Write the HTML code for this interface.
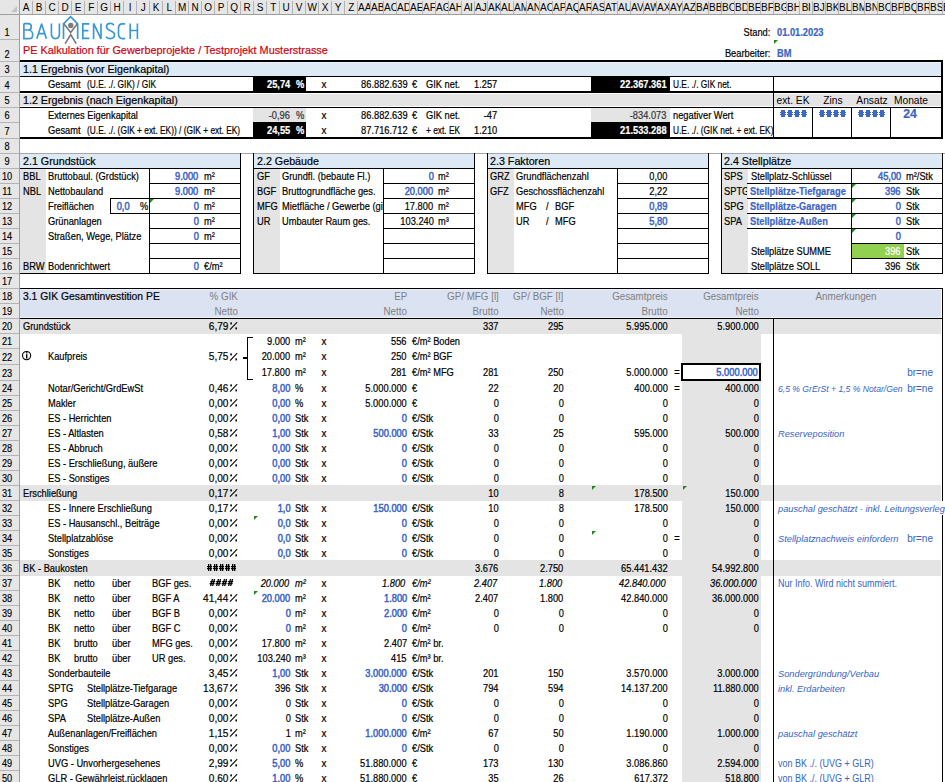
<!DOCTYPE html><html><head><meta charset="utf-8"><style>
html,body{margin:0;padding:0;background:#fff;}
body{width:945px;height:782px;position:relative;overflow:hidden;font-family:"Liberation Sans",sans-serif;}
i{position:absolute;display:block;}
.t{position:absolute;white-space:nowrap;font-weight:400;line-height:1;-webkit-text-stroke:0.2px currentColor;}
.ch{position:absolute;top:0;height:14px;line-height:16px;font-size:10px;font-weight:400;text-align:center;overflow:hidden;color:#000;white-space:nowrap;letter-spacing:-0.4px;}
.rh{position:absolute;left:0;width:14px;text-align:center;font-size:10px;line-height:1;color:#000;transform:scaleX(0.92);transform-origin:7px 0;-webkit-text-stroke:0.15px #000;white-space:nowrap;}
</style></head><body><svg style="position:absolute;left:0;top:0" width="160" height="50" viewBox="0 0 160 50">
<g fill="none" stroke="#3898d4" stroke-width="1.65" stroke-linecap="butt" stroke-linejoin="miter">
<path d="M23.9 23.6V38.6H28.9C31.3 38.6 32.7 37.2 32.7 34.9C32.7 32.4 31.1 30.0 28.5 30.0H23.9M28.5 30.0C30.3 30.0 31.3 28.7 31.3 26.8C31.3 24.8 30.1 23.6 28.1 23.6H23.9"/>
<path d="M36.8 38.8L41.6 24.0L46.4 38.8M38.4 33.6h6.4" stroke-linejoin="round"/>
<path d="M51.4 23.4V33.5c0 3.4 1.6 5.1 4 5.1s4-1.7 4-5.1V23.4"/>
<path d="M63.5 39V23.8L70.6 16.6L77.7 23.8V39"/>
<path d="M89.4 23.8h-6.6V38.4h6.6M82.8 30.6h5.6"/>
<path d="M93.6 39V23.4L101 38.8V23.4"/>
<path d="M114 25.2c-0.9-1.1-2.1-1.8-3.7-1.8c-2.3 0-3.8 1.4-3.8 3.4c0 4.6 8 3.1 8 7.8c0 2.3-1.7 4-4.3 4c-1.7 0-3.1-0.7-4.2-1.9"/>
<path d="M125.2 23.8h-2.8c-2.6 0-3.9 1.6-3.9 4.5v5.8c0 2.9 1.3 4.5 3.9 4.5h2.8"/>
<path d="M130.2 23.4V39M137.4 23.4V39M130.2 30.5h7.2"/>
</g>
<g stroke="#777" stroke-width="1.6" fill="none">
<path d="M63.6 23.6L70.7 32.4L77.6 23.6"/>
<path d="M65.2 43.6L70.7 34.6L76.2 43.6"/>
</g>
<circle cx="70.8" cy="25.5" r="2.7" fill="#7b7b7b"/>
</svg>
<b class="t" style="top:45.27px;font-size:11.5px;color:#d0000f;left:22.6px;transform:scaleX(0.945);transform-origin:0 0;">PE Kalkulation für Gewerbeprojekte / Testprojekt Musterstrasse</b>
<b class="t" style="top:27.11px;font-size:10.5px;color:#000;right:174.5px;transform:scaleX(0.885);transform-origin:100% 0;">Stand:</b>
<b class="t" style="top:27.11px;font-size:10.5px;color:#3b64c6;font-weight:700;left:776.5px;transform:scaleX(0.885);transform-origin:0 0;">01.01.2023</b>
<i style="left:774px;top:40px;width:0;height:0;background:none;border-top:4px solid #1e8a1e;border-right:4px solid transparent"></i>
<b class="t" style="top:48.11px;font-size:10.5px;color:#000;right:174.5px;transform:scaleX(0.885);transform-origin:100% 0;">Bearbeiter:</b>
<b class="t" style="top:48.11px;font-size:10.5px;color:#3b64c6;font-weight:700;left:776.5px;transform:scaleX(0.885);transform-origin:0 0;">BM</b>
<i style="left:20px;top:60px;width:923px;height:2px;background:#000"></i>
<i style="left:20px;top:62px;width:921px;height:14px;background:#eef5fb"></i>
<i style="left:20px;top:63px;width:921px;height:13px;background:#dde9f5"></i>
<i style="left:20px;top:76px;width:923px;height:1px;background:#000"></i>
<i style="left:253px;top:77px;width:53px;height:15px;background:#000"></i>
<i style="left:591px;top:77px;width:79px;height:15px;background:#000"></i>
<i style="left:20px;top:91px;width:923px;height:2px;background:#000"></i>
<i style="left:20px;top:94px;width:921px;height:12px;background:#e4e4e4"></i>
<i style="left:20px;top:107px;width:923px;height:1px;background:#000"></i>
<i style="left:253px;top:108px;width:53px;height:14px;background:#e4e4e4"></i>
<i style="left:253px;top:122px;width:53px;height:16px;background:#000"></i>
<i style="left:591px;top:108px;width:79px;height:14px;background:#e4e4e4"></i>
<i style="left:591px;top:122px;width:79px;height:16px;background:#000"></i>
<i style="left:20px;top:137px;width:923px;height:2px;background:#000"></i>
<i style="left:941px;top:60px;width:2px;height:79px;background:#000"></i>
<i style="left:773px;top:77px;width:1px;height:62px;background:#000"></i>
<i style="left:812px;top:107px;width:1px;height:32px;background:#000"></i>
<i style="left:851px;top:107px;width:1px;height:32px;background:#000"></i>
<i style="left:890px;top:107px;width:1px;height:32px;background:#000"></i>
<b class="t" style="top:64.39px;font-size:11px;color:#000;left:22.7px;transform:scaleX(0.973);transform-origin:0 0;">1.1 Ergebnis (vor Eigenkapital)</b>
<b class="t" style="top:79.11px;font-size:10.5px;color:#000;left:48px;transform:scaleX(0.885);transform-origin:0 0;">Gesamt</b>
<b class="t" style="top:79.11px;font-size:10.5px;color:#000;left:87.4px;transform:scaleX(0.795);transform-origin:0 0;">(U.E. ./. GIK) / GIK</b>
<b class="t" style="top:79.11px;font-size:10.5px;color:#fff;font-weight:700;right:655px;transform:scaleX(0.885);transform-origin:100% 0;">25,74</b>
<b class="t" style="top:79.11px;font-size:10.5px;color:#fff;font-weight:700;left:296px;transform:scaleX(0.885);transform-origin:0 0;">%</b>
<b class="t" style="top:79.11px;font-size:10.5px;color:#000;left:324px;transform:translateX(-50%) scaleX(0.95);transform-origin:50% 0;">x</b>
<b class="t" style="top:79.11px;font-size:10.5px;color:#000;right:537.5px;transform:scaleX(0.885);transform-origin:100% 0;">86.882.639</b>
<b class="t" style="top:79.11px;font-size:10.5px;color:#000;left:412px;transform:scaleX(0.885);transform-origin:0 0;">€</b>
<b class="t" style="top:79.11px;font-size:10.5px;color:#000;left:425.5px;transform:scaleX(0.885);transform-origin:0 0;">GIK net.</b>
<b class="t" style="top:79.11px;font-size:10.5px;color:#000;right:447.5px;transform:scaleX(0.885);transform-origin:100% 0;">1.257</b>
<b class="t" style="top:79.11px;font-size:10.5px;color:#fff;font-weight:700;right:278.5px;transform:scaleX(0.885);transform-origin:100% 0;">22.367.361</b>
<b class="t" style="top:79.11px;font-size:10.5px;color:#000;left:673px;transform:scaleX(0.795);transform-origin:0 0;">U.E. ./. GIK net.</b>
<b class="t" style="top:95.39px;font-size:11px;color:#000;left:22.7px;transform:scaleX(0.973);transform-origin:0 0;">1.2 Ergebnis (nach Eigenkapital)</b>
<b class="t" style="top:94.69px;font-size:11px;color:#000;left:793px;transform:translateX(-50%) scaleX(0.93);transform-origin:50% 0;-webkit-text-stroke:0;">ext. EK</b>
<b class="t" style="top:94.69px;font-size:11px;color:#000;left:832.5px;transform:translateX(-50%) scaleX(0.93);transform-origin:50% 0;-webkit-text-stroke:0;">Zins</b>
<b class="t" style="top:94.69px;font-size:11px;color:#000;left:871.5px;transform:translateX(-50%) scaleX(0.93);transform-origin:50% 0;-webkit-text-stroke:0;">Ansatz</b>
<b class="t" style="top:94.69px;font-size:11px;color:#000;left:911px;transform:translateX(-50%) scaleX(0.93);transform-origin:50% 0;-webkit-text-stroke:0;">Monate</b>
<b class="t" style="top:110.11px;font-size:10.5px;color:#000;left:48px;transform:scaleX(0.885);transform-origin:0 0;">Externes Eigenkapital</b>
<b class="t" style="top:110.11px;font-size:10.5px;color:#333;right:655px;transform:scaleX(0.885);transform-origin:100% 0;">-0,96</b>
<b class="t" style="top:110.11px;font-size:10.5px;color:#333;left:296px;transform:scaleX(0.885);transform-origin:0 0;">%</b>
<b class="t" style="top:110.11px;font-size:10.5px;color:#000;left:324px;transform:translateX(-50%) scaleX(0.95);transform-origin:50% 0;">x</b>
<b class="t" style="top:110.11px;font-size:10.5px;color:#000;right:537.5px;transform:scaleX(0.885);transform-origin:100% 0;">86.882.639</b>
<b class="t" style="top:110.11px;font-size:10.5px;color:#000;left:412px;transform:scaleX(0.885);transform-origin:0 0;">€</b>
<b class="t" style="top:110.11px;font-size:10.5px;color:#000;left:425.5px;transform:scaleX(0.885);transform-origin:0 0;">GIK net.</b>
<b class="t" style="top:110.11px;font-size:10.5px;color:#000;right:447.5px;transform:scaleX(0.885);transform-origin:100% 0;">-47</b>
<b class="t" style="top:110.11px;font-size:10.5px;color:#333;right:278.5px;transform:scaleX(0.885);transform-origin:100% 0;">-834.073</b>
<b class="t" style="top:110.11px;font-size:10.5px;color:#000;left:673px;transform:scaleX(0.885);transform-origin:0 0;">negativer Wert</b>
<i style="left:781px;top:110px;width:4px;height:7px;background:#3c68c8"></i>
<i style="left:780px;top:112px;width:6px;height:1px;background:#3c68c8"></i>
<i style="left:780px;top:114px;width:6px;height:1px;background:#3c68c8"></i>
<i style="left:788px;top:110px;width:4px;height:7px;background:#3c68c8"></i>
<i style="left:787px;top:112px;width:6px;height:1px;background:#3c68c8"></i>
<i style="left:787px;top:114px;width:6px;height:1px;background:#3c68c8"></i>
<i style="left:795px;top:110px;width:4px;height:7px;background:#3c68c8"></i>
<i style="left:794px;top:112px;width:6px;height:1px;background:#3c68c8"></i>
<i style="left:794px;top:114px;width:6px;height:1px;background:#3c68c8"></i>
<i style="left:802px;top:110px;width:4px;height:7px;background:#3c68c8"></i>
<i style="left:801px;top:112px;width:6px;height:1px;background:#3c68c8"></i>
<i style="left:801px;top:114px;width:6px;height:1px;background:#3c68c8"></i>
<i style="left:820px;top:110px;width:4px;height:7px;background:#3c68c8"></i>
<i style="left:819px;top:112px;width:6px;height:1px;background:#3c68c8"></i>
<i style="left:819px;top:114px;width:6px;height:1px;background:#3c68c8"></i>
<i style="left:827px;top:110px;width:4px;height:7px;background:#3c68c8"></i>
<i style="left:826px;top:112px;width:6px;height:1px;background:#3c68c8"></i>
<i style="left:826px;top:114px;width:6px;height:1px;background:#3c68c8"></i>
<i style="left:834px;top:110px;width:4px;height:7px;background:#3c68c8"></i>
<i style="left:833px;top:112px;width:6px;height:1px;background:#3c68c8"></i>
<i style="left:833px;top:114px;width:6px;height:1px;background:#3c68c8"></i>
<i style="left:841px;top:110px;width:4px;height:7px;background:#3c68c8"></i>
<i style="left:840px;top:112px;width:6px;height:1px;background:#3c68c8"></i>
<i style="left:840px;top:114px;width:6px;height:1px;background:#3c68c8"></i>
<i style="left:859px;top:110px;width:4px;height:7px;background:#3c68c8"></i>
<i style="left:858px;top:112px;width:6px;height:1px;background:#3c68c8"></i>
<i style="left:858px;top:114px;width:6px;height:1px;background:#3c68c8"></i>
<i style="left:866px;top:110px;width:4px;height:7px;background:#3c68c8"></i>
<i style="left:865px;top:112px;width:6px;height:1px;background:#3c68c8"></i>
<i style="left:865px;top:114px;width:6px;height:1px;background:#3c68c8"></i>
<i style="left:873px;top:110px;width:4px;height:7px;background:#3c68c8"></i>
<i style="left:872px;top:112px;width:6px;height:1px;background:#3c68c8"></i>
<i style="left:872px;top:114px;width:6px;height:1px;background:#3c68c8"></i>
<i style="left:880px;top:110px;width:4px;height:7px;background:#3c68c8"></i>
<i style="left:879px;top:112px;width:6px;height:1px;background:#3c68c8"></i>
<i style="left:879px;top:114px;width:6px;height:1px;background:#3c68c8"></i>
<b class="t" style="top:107.92px;font-size:12.5px;color:#3b64c6;font-weight:700;left:910.3px;transform:translateX(-50%) scaleX(0.98);transform-origin:50% 0;">24</b>
<b class="t" style="top:125.11px;font-size:10.5px;color:#000;left:48px;transform:scaleX(0.885);transform-origin:0 0;">Gesamt</b>
<b class="t" style="top:125.11px;font-size:10.5px;color:#000;left:87.4px;transform:scaleX(0.795);transform-origin:0 0;">(U.E. ./. (GIK + ext. EK)) / (GIK + ext. EK)</b>
<b class="t" style="top:125.11px;font-size:10.5px;color:#fff;font-weight:700;right:655px;transform:scaleX(0.885);transform-origin:100% 0;">24,55</b>
<b class="t" style="top:125.11px;font-size:10.5px;color:#fff;font-weight:700;left:296px;transform:scaleX(0.885);transform-origin:0 0;">%</b>
<b class="t" style="top:125.11px;font-size:10.5px;color:#000;left:324px;transform:translateX(-50%) scaleX(0.95);transform-origin:50% 0;">x</b>
<b class="t" style="top:125.11px;font-size:10.5px;color:#000;right:537.5px;transform:scaleX(0.885);transform-origin:100% 0;">87.716.712</b>
<b class="t" style="top:125.11px;font-size:10.5px;color:#000;left:412px;transform:scaleX(0.885);transform-origin:0 0;">€</b>
<b class="t" style="top:125.11px;font-size:10.5px;color:#000;left:425.5px;transform:scaleX(0.795);transform-origin:0 0;">+ ext. EK</b>
<b class="t" style="top:125.11px;font-size:10.5px;color:#000;right:447.5px;transform:scaleX(0.885);transform-origin:100% 0;">1.210</b>
<b class="t" style="top:125.11px;font-size:10.5px;color:#fff;font-weight:700;right:278.5px;transform:scaleX(0.885);transform-origin:100% 0;">21.533.288</b>
<div style="position:absolute;left:670px;top:123px;width:103px;height:16px;overflow:hidden">
<b class="t" style="top:2.11px;font-size:10.5px;color:#000;left:3px;transform:scaleX(0.795);transform-origin:0 0;">U.E. ./. (GIK net. + ext. EK)</b></div>
<i style="left:20px;top:153px;width:925px;height:1px;background:#a6a6a6"></i>
<i style="left:20px;top:154px;width:220px;height:14px;background:#dde9f5"></i>
<i style="left:20px;top:168px;width:221px;height:1px;background:#000"></i>
<i style="left:240px;top:153px;width:1px;height:121px;background:#000"></i>
<i style="left:20px;top:169px;width:26px;height:104px;background:#e4e4e4"></i>
<i style="left:149px;top:168px;width:1px;height:106px;background:#000"></i>
<i style="left:149px;top:183px;width:92px;height:1px;background:#000"></i>
<i style="left:110px;top:198px;width:131px;height:1px;background:#000"></i>
<i style="left:110px;top:213px;width:131px;height:1px;background:#000"></i>
<i style="left:149px;top:228px;width:92px;height:1px;background:#000"></i>
<i style="left:149px;top:243px;width:92px;height:1px;background:#000"></i>
<i style="left:149px;top:258px;width:92px;height:1px;background:#000"></i>
<i style="left:20px;top:273px;width:221px;height:1px;background:#000"></i>
<i style="left:110px;top:198px;width:1px;height:16px;background:#000"></i>
<i style="left:253px;top:153px;width:1px;height:121px;background:#000"></i>
<i style="left:254px;top:154px;width:220px;height:14px;background:#dde9f5"></i>
<i style="left:253px;top:168px;width:222px;height:1px;background:#000"></i>
<i style="left:474px;top:153px;width:1px;height:121px;background:#000"></i>
<i style="left:254px;top:169px;width:26px;height:104px;background:#e4e4e4"></i>
<i style="left:383px;top:168px;width:1px;height:106px;background:#000"></i>
<i style="left:383px;top:183px;width:92px;height:1px;background:#000"></i>
<i style="left:383px;top:198px;width:92px;height:1px;background:#000"></i>
<i style="left:383px;top:213px;width:92px;height:1px;background:#000"></i>
<i style="left:383px;top:228px;width:92px;height:1px;background:#000"></i>
<i style="left:383px;top:243px;width:92px;height:1px;background:#000"></i>
<i style="left:383px;top:258px;width:92px;height:1px;background:#000"></i>
<i style="left:253px;top:273px;width:222px;height:1px;background:#000"></i>
<i style="left:487px;top:153px;width:1px;height:121px;background:#000"></i>
<i style="left:488px;top:154px;width:220px;height:14px;background:#dde9f5"></i>
<i style="left:487px;top:168px;width:222px;height:1px;background:#000"></i>
<i style="left:708px;top:153px;width:1px;height:121px;background:#000"></i>
<i style="left:488px;top:169px;width:26px;height:104px;background:#e4e4e4"></i>
<i style="left:617px;top:168px;width:1px;height:106px;background:#000"></i>
<i style="left:617px;top:183px;width:92px;height:1px;background:#000"></i>
<i style="left:617px;top:198px;width:92px;height:1px;background:#000"></i>
<i style="left:617px;top:213px;width:92px;height:1px;background:#000"></i>
<i style="left:617px;top:228px;width:92px;height:1px;background:#000"></i>
<i style="left:617px;top:243px;width:92px;height:1px;background:#000"></i>
<i style="left:617px;top:258px;width:92px;height:1px;background:#000"></i>
<i style="left:487px;top:273px;width:222px;height:1px;background:#000"></i>
<i style="left:721px;top:153px;width:1px;height:121px;background:#000"></i>
<i style="left:722px;top:154px;width:220px;height:14px;background:#dde9f5"></i>
<i style="left:721px;top:168px;width:222px;height:1px;background:#000"></i>
<i style="left:942px;top:153px;width:1px;height:121px;background:#000"></i>
<i style="left:722px;top:169px;width:26px;height:104px;background:#e4e4e4"></i>
<i style="left:851px;top:168px;width:1px;height:106px;background:#000"></i>
<i style="left:747px;top:183px;width:196px;height:1px;background:#000"></i>
<i style="left:747px;top:198px;width:196px;height:1px;background:#000"></i>
<i style="left:747px;top:213px;width:196px;height:1px;background:#000"></i>
<i style="left:747px;top:228px;width:196px;height:1px;background:#000"></i>
<i style="left:851px;top:243px;width:92px;height:1px;background:#000"></i>
<i style="left:851px;top:258px;width:92px;height:1px;background:#000"></i>
<i style="left:721px;top:273px;width:222px;height:1px;background:#000"></i>
<i style="left:852px;top:244px;width:52px;height:14px;background:#92d050"></i>
<b class="t" style="top:156.39px;font-size:11px;color:#000;left:22.5px;transform:scaleX(0.973);transform-origin:0 0;">2.1 Grundstück</b>
<b class="t" style="top:171.11px;font-size:10.5px;color:#000;left:22.5px;transform:scaleX(0.885);transform-origin:0 0;">BBL</b>
<b class="t" style="top:171.11px;font-size:10.5px;color:#000;left:48px;transform:scaleX(0.885);transform-origin:0 0;">Bruttobaul. (Grdstück)</b>
<b class="t" style="top:171.11px;font-size:10.5px;color:#3b64c6;right:746.5px;transform:scaleX(0.885);transform-origin:100% 0;-webkit-text-stroke:0.5px #3b64c6;">9.000</b>
<b class="t" style="top:171.11px;font-size:10.5px;color:#000;left:204px;transform:scaleX(0.885);transform-origin:0 0;">m²</b>
<b class="t" style="top:186.11px;font-size:10.5px;color:#000;left:22.5px;transform:scaleX(0.885);transform-origin:0 0;">NBL</b>
<b class="t" style="top:186.11px;font-size:10.5px;color:#000;left:48px;transform:scaleX(0.885);transform-origin:0 0;">Nettobauland</b>
<b class="t" style="top:186.11px;font-size:10.5px;color:#3b64c6;right:746.5px;transform:scaleX(0.885);transform-origin:100% 0;-webkit-text-stroke:0.5px #3b64c6;">9.000</b>
<b class="t" style="top:186.11px;font-size:10.5px;color:#000;left:204px;transform:scaleX(0.885);transform-origin:0 0;">m²</b>
<b class="t" style="top:201.11px;font-size:10.5px;color:#000;left:48px;transform:scaleX(0.885);transform-origin:0 0;">Freiflächen</b>
<b class="t" style="top:201.11px;font-size:10.5px;color:#3b64c6;right:815px;transform:scaleX(0.885);transform-origin:100% 0;-webkit-text-stroke:0.5px #3b64c6;">0,0</b>
<b class="t" style="top:201.11px;font-size:10.5px;color:#000;left:139.5px;transform:scaleX(0.885);transform-origin:0 0;">%</b>
<b class="t" style="top:201.11px;font-size:10.5px;color:#3b64c6;right:746.5px;transform:scaleX(0.885);transform-origin:100% 0;-webkit-text-stroke:0.5px #3b64c6;">0</b>
<b class="t" style="top:201.11px;font-size:10.5px;color:#000;left:204px;transform:scaleX(0.885);transform-origin:0 0;">m²</b>
<i style="left:150px;top:199px;width:0;height:0;background:none;border-top:4px solid #1e8a1e;border-right:4px solid transparent"></i>
<b class="t" style="top:216.11px;font-size:10.5px;color:#000;left:48px;transform:scaleX(0.885);transform-origin:0 0;">Grünanlagen</b>
<b class="t" style="top:216.11px;font-size:10.5px;color:#3b64c6;right:746.5px;transform:scaleX(0.885);transform-origin:100% 0;-webkit-text-stroke:0.5px #3b64c6;">0</b>
<b class="t" style="top:216.11px;font-size:10.5px;color:#000;left:204px;transform:scaleX(0.885);transform-origin:0 0;">m²</b>
<b class="t" style="top:231.11px;font-size:10.5px;color:#000;left:48px;transform:scaleX(0.885);transform-origin:0 0;">Straßen, Wege, Plätze</b>
<b class="t" style="top:231.11px;font-size:10.5px;color:#3b64c6;right:746.5px;transform:scaleX(0.885);transform-origin:100% 0;-webkit-text-stroke:0.5px #3b64c6;">0</b>
<b class="t" style="top:231.11px;font-size:10.5px;color:#000;left:204px;transform:scaleX(0.885);transform-origin:0 0;">m²</b>
<b class="t" style="top:261.11px;font-size:10.5px;color:#000;left:22.5px;transform:scaleX(0.885);transform-origin:0 0;">BRW</b>
<b class="t" style="top:261.11px;font-size:10.5px;color:#000;left:48px;transform:scaleX(0.885);transform-origin:0 0;">Bodenrichtwert</b>
<b class="t" style="top:261.11px;font-size:10.5px;color:#3b64c6;right:746.5px;transform:scaleX(0.885);transform-origin:100% 0;-webkit-text-stroke:0.5px #3b64c6;">0</b>
<b class="t" style="top:261.11px;font-size:10.5px;color:#000;left:204px;transform:scaleX(0.885);transform-origin:0 0;">€/m²</b>
<b class="t" style="top:156.39px;font-size:11px;color:#000;left:256.5px;transform:scaleX(0.973);transform-origin:0 0;">2.2 Gebäude</b>
<b class="t" style="top:171.11px;font-size:10.5px;color:#000;left:256.5px;transform:scaleX(0.885);transform-origin:0 0;">GF</b>
<b class="t" style="top:171.11px;font-size:10.5px;color:#000;left:282.4px;transform:scaleX(0.885);transform-origin:0 0;">Grundfl. (bebaute Fl.)</b>
<b class="t" style="top:171.11px;font-size:10.5px;color:#3b64c6;right:511.5px;transform:scaleX(0.885);transform-origin:100% 0;-webkit-text-stroke:0.5px #3b64c6;">0</b>
<b class="t" style="top:171.11px;font-size:10.5px;color:#000;left:438px;transform:scaleX(0.885);transform-origin:0 0;">m²</b>
<b class="t" style="top:186.11px;font-size:10.5px;color:#000;left:256.5px;transform:scaleX(0.885);transform-origin:0 0;">BGF</b>
<b class="t" style="top:186.11px;font-size:10.5px;color:#000;left:282.4px;transform:scaleX(0.885);transform-origin:0 0;">Bruttogrundfläche ges.</b>
<b class="t" style="top:186.11px;font-size:10.5px;color:#3b64c6;right:511.5px;transform:scaleX(0.885);transform-origin:100% 0;-webkit-text-stroke:0.5px #3b64c6;">20.000</b>
<b class="t" style="top:186.11px;font-size:10.5px;color:#000;left:438px;transform:scaleX(0.885);transform-origin:0 0;">m²</b>
<b class="t" style="top:201.11px;font-size:10.5px;color:#000;left:256.5px;transform:scaleX(0.885);transform-origin:0 0;">MFG</b>
<div style="position:absolute;left:280px;top:199px;width:103px;height:15px;overflow:hidden">
<b class="t" style="top:2.11px;font-size:10.5px;color:#000;left:2.3999999999999773px;transform:scaleX(0.885);transform-origin:0 0;">Mietfläche / Gewerbe (gif)</b></div>
<b class="t" style="top:201.11px;font-size:10.5px;color:#000;right:511.5px;transform:scaleX(0.885);transform-origin:100% 0;">17.800</b>
<b class="t" style="top:201.11px;font-size:10.5px;color:#000;left:438px;transform:scaleX(0.885);transform-origin:0 0;">m²</b>
<b class="t" style="top:216.11px;font-size:10.5px;color:#000;left:256.5px;transform:scaleX(0.885);transform-origin:0 0;">UR</b>
<b class="t" style="top:216.11px;font-size:10.5px;color:#000;left:282.4px;transform:scaleX(0.885);transform-origin:0 0;">Umbauter Raum ges.</b>
<b class="t" style="top:216.11px;font-size:10.5px;color:#000;right:511.5px;transform:scaleX(0.885);transform-origin:100% 0;">103.240</b>
<b class="t" style="top:216.11px;font-size:10.5px;color:#000;left:438px;transform:scaleX(0.885);transform-origin:0 0;">m³</b>
<b class="t" style="top:156.39px;font-size:11px;color:#000;left:489.8px;transform:scaleX(0.973);transform-origin:0 0;">2.3 Faktoren</b>
<b class="t" style="top:171.11px;font-size:10.5px;color:#000;left:489.8px;transform:scaleX(0.885);transform-origin:0 0;">GRZ</b>
<b class="t" style="top:171.11px;font-size:10.5px;color:#000;left:516.3px;transform:scaleX(0.885);transform-origin:0 0;">Grundflächenzahl</b>
<b class="t" style="top:171.11px;font-size:10.5px;color:#000;right:278px;transform:scaleX(0.885);transform-origin:100% 0;">0,00</b>
<b class="t" style="top:186.11px;font-size:10.5px;color:#000;left:489.8px;transform:scaleX(0.885);transform-origin:0 0;">GFZ</b>
<b class="t" style="top:186.11px;font-size:10.5px;color:#000;left:516.3px;transform:scaleX(0.885);transform-origin:0 0;">Geschossflächenzahl</b>
<b class="t" style="top:186.11px;font-size:10.5px;color:#000;right:278px;transform:scaleX(0.885);transform-origin:100% 0;">2,22</b>
<b class="t" style="top:201.11px;font-size:10.5px;color:#000;left:516.3px;transform:scaleX(0.885);transform-origin:0 0;">MFG</b>
<b class="t" style="top:201.11px;font-size:10.5px;color:#000;left:546px;transform:scaleX(0.885);transform-origin:0 0;">/</b>
<b class="t" style="top:201.11px;font-size:10.5px;color:#000;left:555.2px;transform:scaleX(0.885);transform-origin:0 0;">BGF</b>
<b class="t" style="top:201.11px;font-size:10.5px;color:#3b64c6;right:278px;transform:scaleX(0.885);transform-origin:100% 0;-webkit-text-stroke:0.5px #3b64c6;">0,89</b>
<b class="t" style="top:216.11px;font-size:10.5px;color:#000;left:516.3px;transform:scaleX(0.885);transform-origin:0 0;">UR</b>
<b class="t" style="top:216.11px;font-size:10.5px;color:#000;left:546px;transform:scaleX(0.885);transform-origin:0 0;">/</b>
<b class="t" style="top:216.11px;font-size:10.5px;color:#000;left:555.2px;transform:scaleX(0.885);transform-origin:0 0;">MFG</b>
<b class="t" style="top:216.11px;font-size:10.5px;color:#3b64c6;right:278px;transform:scaleX(0.885);transform-origin:100% 0;-webkit-text-stroke:0.5px #3b64c6;">5,80</b>
<b class="t" style="top:156.39px;font-size:11px;color:#000;left:724px;transform:scaleX(0.973);transform-origin:0 0;">2.4 Stellplätze</b>
<b class="t" style="top:171.11px;font-size:10.5px;color:#000;left:724px;transform:scaleX(0.885);transform-origin:0 0;">SPS</b>
<b class="t" style="top:171.11px;font-size:10.5px;color:#000;left:750.6px;transform:scaleX(0.885);transform-origin:0 0;">Stellplatz-Schlüssel</b>
<b class="t" style="top:171.11px;font-size:10.5px;color:#3b64c6;right:44px;transform:scaleX(0.885);transform-origin:100% 0;-webkit-text-stroke:0.5px #3b64c6;">45,00</b>
<b class="t" style="top:171.11px;font-size:10.5px;color:#000;left:906px;transform:scaleX(0.885);transform-origin:0 0;">m²/Stk</b>
<div style="position:absolute;left:722px;top:184px;width:25px;height:15px;overflow:hidden">
<b class="t" style="top:2.11px;font-size:10.5px;color:#000;left:2px;transform:scaleX(0.885);transform-origin:0 0;">SPTG</b></div>
<b class="t" style="top:186.11px;font-size:10.5px;color:#3b64c6;font-weight:700;left:750.4px;transform:scaleX(0.885);transform-origin:0 0;">Stellplätze-Tiefgarage</b>
<b class="t" style="top:186.11px;font-size:10.5px;color:#3b64c6;right:44px;transform:scaleX(0.885);transform-origin:100% 0;-webkit-text-stroke:0.5px #3b64c6;">396</b>
<b class="t" style="top:186.11px;font-size:10.5px;color:#000;left:906px;transform:scaleX(0.885);transform-origin:0 0;">Stk</b>
<b class="t" style="top:201.11px;font-size:10.5px;color:#000;left:724px;transform:scaleX(0.885);transform-origin:0 0;">SPG</b>
<b class="t" style="top:201.11px;font-size:10.5px;color:#3b64c6;font-weight:700;left:750.4px;transform:scaleX(0.885);transform-origin:0 0;">Stellplätze-Garagen</b>
<b class="t" style="top:201.11px;font-size:10.5px;color:#3b64c6;right:44px;transform:scaleX(0.885);transform-origin:100% 0;-webkit-text-stroke:0.5px #3b64c6;">0</b>
<b class="t" style="top:201.11px;font-size:10.5px;color:#000;left:906px;transform:scaleX(0.885);transform-origin:0 0;">Stk</b>
<b class="t" style="top:216.11px;font-size:10.5px;color:#000;left:724px;transform:scaleX(0.885);transform-origin:0 0;">SPA</b>
<b class="t" style="top:216.11px;font-size:10.5px;color:#3b64c6;font-weight:700;left:750.4px;transform:scaleX(0.885);transform-origin:0 0;">Stellplätze-Außen</b>
<b class="t" style="top:216.11px;font-size:10.5px;color:#3b64c6;right:44px;transform:scaleX(0.885);transform-origin:100% 0;-webkit-text-stroke:0.5px #3b64c6;">0</b>
<b class="t" style="top:216.11px;font-size:10.5px;color:#000;left:906px;transform:scaleX(0.885);transform-origin:0 0;">Stk</b>
<b class="t" style="top:231.11px;font-size:10.5px;color:#3b64c6;right:44px;transform:scaleX(0.885);transform-origin:100% 0;-webkit-text-stroke:0.5px #3b64c6;">0</b>
<b class="t" style="top:246.11px;font-size:10.5px;color:#000;left:750.6px;transform:scaleX(0.885);transform-origin:0 0;">Stellplätze SUMME</b>
<b class="t" style="top:246.11px;font-size:10.5px;color:#fff;right:44px;transform:scaleX(0.885);transform-origin:100% 0;">396</b>
<b class="t" style="top:246.11px;font-size:10.5px;color:#000;left:906px;transform:scaleX(0.885);transform-origin:0 0;">Stk</b>
<b class="t" style="top:261.11px;font-size:10.5px;color:#000;left:750.6px;transform:scaleX(0.885);transform-origin:0 0;">Stellplätze SOLL</b>
<b class="t" style="top:261.11px;font-size:10.5px;color:#000;right:44px;transform:scaleX(0.885);transform-origin:100% 0;">396</b>
<b class="t" style="top:261.11px;font-size:10.5px;color:#000;left:906px;transform:scaleX(0.885);transform-origin:0 0;">Stk</b>
<i style="left:852px;top:184px;width:0;height:0;background:none;border-top:4px solid #1e8a1e;border-right:4px solid transparent"></i>
<i style="left:852px;top:199px;width:0;height:0;background:none;border-top:4px solid #1e8a1e;border-right:4px solid transparent"></i>
<i style="left:852px;top:214px;width:0;height:0;background:none;border-top:4px solid #1e8a1e;border-right:4px solid transparent"></i>
<i style="left:852px;top:229px;width:0;height:0;background:none;border-top:4px solid #1e8a1e;border-right:4px solid transparent"></i>
<i style="left:20px;top:289px;width:921px;height:29px;background:#eef1f9"></i>
<i style="left:20px;top:290px;width:921px;height:27px;background:#dbe2f2"></i>
<i style="left:20px;top:288px;width:923px;height:1px;background:#000"></i>
<b class="t" style="top:291.39px;font-size:11px;color:#000;left:22.5px;transform:scaleX(0.973);transform-origin:0 0;transform:scaleX(0.94);">3.1 GIK Gesamtinvestition PE</b>
<b class="t" style="top:291.54px;font-size:10px;color:#7f7f7f;right:707px;transform:scaleX(0.98);transform-origin:100% 0;-webkit-text-stroke:0;">% GIK</b>
<b class="t" style="top:306.54px;font-size:10px;color:#7f7f7f;right:707px;transform:scaleX(0.98);transform-origin:100% 0;-webkit-text-stroke:0;">Netto</b>
<b class="t" style="top:291.54px;font-size:10px;color:#7f7f7f;right:538px;transform:scaleX(0.98);transform-origin:100% 0;-webkit-text-stroke:0;">EP</b>
<b class="t" style="top:306.54px;font-size:10px;color:#7f7f7f;right:538px;transform:scaleX(0.98);transform-origin:100% 0;-webkit-text-stroke:0;">Netto</b>
<b class="t" style="top:291.54px;font-size:10px;color:#7f7f7f;right:446.5px;transform:scaleX(0.98);transform-origin:100% 0;-webkit-text-stroke:0;">GP/ MFG [l]</b>
<b class="t" style="top:306.54px;font-size:10px;color:#7f7f7f;right:446.5px;transform:scaleX(0.98);transform-origin:100% 0;-webkit-text-stroke:0;">Brutto</b>
<b class="t" style="top:291.54px;font-size:10px;color:#7f7f7f;right:381.5px;transform:scaleX(0.98);transform-origin:100% 0;-webkit-text-stroke:0;">GP/ BGF [l]</b>
<b class="t" style="top:306.54px;font-size:10px;color:#7f7f7f;right:381.5px;transform:scaleX(0.98);transform-origin:100% 0;-webkit-text-stroke:0;">Netto</b>
<b class="t" style="top:291.54px;font-size:10px;color:#7f7f7f;right:277.5px;transform:scaleX(0.98);transform-origin:100% 0;-webkit-text-stroke:0;">Gesamtpreis</b>
<b class="t" style="top:306.54px;font-size:10px;color:#7f7f7f;right:277.5px;transform:scaleX(0.98);transform-origin:100% 0;-webkit-text-stroke:0;">Brutto</b>
<b class="t" style="top:291.54px;font-size:10px;color:#7f7f7f;right:186.5px;transform:scaleX(0.98);transform-origin:100% 0;-webkit-text-stroke:0;">Gesamtpreis</b>
<b class="t" style="top:306.54px;font-size:10px;color:#7f7f7f;right:186.5px;transform:scaleX(0.98);transform-origin:100% 0;-webkit-text-stroke:0;">Netto</b>
<b class="t" style="top:291.54px;font-size:10px;color:#7f7f7f;left:845.5px;transform:translateX(-50%) scaleX(0.98);transform-origin:50% 0;-webkit-text-stroke:0;">Anmerkungen</b>
<i style="left:682px;top:334px;width:79px;height:448px;background:#e4e4e4"></i>
<i style="left:20px;top:318px;width:921px;height:16px;background:#e4e4e4"></i>
<i style="left:20px;top:485px;width:921px;height:16px;background:#e4e4e4"></i>
<i style="left:20px;top:560px;width:921px;height:16px;background:#e4e4e4"></i>
<i style="left:20px;top:318px;width:923px;height:1px;background:#000"></i>
<i style="left:942px;top:288px;width:1px;height:31px;background:#000"></i>
<i style="left:942px;top:319px;width:1px;height:463px;background:#000"></i>
<i style="left:773px;top:319px;width:1px;height:463px;background:#000"></i>
<b class="t" style="top:321.11px;font-size:10.5px;color:#000;left:22.5px;transform:scaleX(0.885);transform-origin:0 0;">Grundstück</b>
<b class="t" style="top:321.11px;font-size:10.5px;color:#000;right:716.4px;transform:scaleX(0.96);transform-origin:100% 0;">6,79</b>
<svg style="position:absolute;left:229px;top:322px" width="10" height="10"><rect x="1.3" y="0.4" width="1.6" height="2" fill="#000"/><rect x="6.4" y="5.4" width="1.6" height="2" fill="#000"/><path d="M1 7.6L8.2 0.2" stroke="#000" stroke-width="1.1"/></svg>
<b class="t" style="top:321.11px;font-size:10.5px;color:#000;right:446.5px;transform:scaleX(0.885);transform-origin:100% 0;">337</b>
<b class="t" style="top:321.11px;font-size:10.5px;color:#000;right:381.5px;transform:scaleX(0.885);transform-origin:100% 0;">295</b>
<b class="t" style="top:321.11px;font-size:10.5px;color:#000;right:277.5px;transform:scaleX(0.885);transform-origin:100% 0;">5.995.000</b>
<b class="t" style="top:321.11px;font-size:10.5px;color:#000;right:186.5px;transform:scaleX(0.885);transform-origin:100% 0;">5.900.000</b>
<svg style="position:absolute;left:0;top:0" width="60" height="400"><circle cx="26.6" cy="355.6" r="4.1" fill="none" stroke="#000" stroke-width="1.1"/><rect x="26" y="354.2" width="1.4" height="4.3" fill="#000"/><rect x="26" y="352.2" width="1.4" height="1.2" fill="#000"/></svg>
<b class="t" style="top:351.11px;font-size:10.5px;color:#000;left:48px;transform:scaleX(0.885);transform-origin:0 0;">Kaufpreis</b>
<b class="t" style="top:351.11px;font-size:10.5px;color:#000;right:716.4px;transform:scaleX(0.96);transform-origin:100% 0;">5,75</b>
<svg style="position:absolute;left:229px;top:353px" width="10" height="10"><rect x="1.3" y="0.4" width="1.6" height="2" fill="#000"/><rect x="6.4" y="5.4" width="1.6" height="2" fill="#000"/><path d="M1 7.6L8.2 0.2" stroke="#000" stroke-width="1.1"/></svg>
<i style="left:247px;top:337px;width:1px;height:43px;background:#000"></i>
<i style="left:247px;top:337px;width:6px;height:1px;background:#000"></i>
<i style="left:247px;top:379px;width:6px;height:1px;background:#000"></i>
<i style="left:243px;top:357px;width:5px;height:2px;background:#000"></i>
<b class="t" style="top:336.11px;font-size:10.5px;color:#000;right:654.5px;transform:scaleX(0.885);transform-origin:100% 0;">9.000</b>
<b class="t" style="top:336.11px;font-size:10.5px;color:#000;left:295px;transform:scaleX(0.885);transform-origin:0 0;">m²</b>
<b class="t" style="top:336.11px;font-size:10.5px;color:#000;left:324px;transform:translateX(-50%) scaleX(0.95);transform-origin:50% 0;">x</b>
<b class="t" style="top:336.11px;font-size:10.5px;color:#000;right:538px;transform:scaleX(0.885);transform-origin:100% 0;">556</b>
<b class="t" style="top:336.11px;font-size:10.5px;color:#000;left:412px;transform:scaleX(0.885);transform-origin:0 0;">€/m² Boden</b>
<b class="t" style="top:351.11px;font-size:10.5px;color:#000;right:654.5px;transform:scaleX(0.885);transform-origin:100% 0;">20.000</b>
<b class="t" style="top:351.11px;font-size:10.5px;color:#000;left:295px;transform:scaleX(0.885);transform-origin:0 0;">m²</b>
<b class="t" style="top:351.11px;font-size:10.5px;color:#000;left:324px;transform:translateX(-50%) scaleX(0.95);transform-origin:50% 0;">x</b>
<b class="t" style="top:351.11px;font-size:10.5px;color:#000;right:538px;transform:scaleX(0.885);transform-origin:100% 0;">250</b>
<b class="t" style="top:351.11px;font-size:10.5px;color:#000;left:412px;transform:scaleX(0.885);transform-origin:0 0;">€/m² BGF</b>
<b class="t" style="top:367.11px;font-size:10.5px;color:#000;right:654.5px;transform:scaleX(0.885);transform-origin:100% 0;">17.800</b>
<b class="t" style="top:367.11px;font-size:10.5px;color:#000;left:295px;transform:scaleX(0.885);transform-origin:0 0;">m²</b>
<b class="t" style="top:367.11px;font-size:10.5px;color:#000;left:324px;transform:translateX(-50%) scaleX(0.95);transform-origin:50% 0;">x</b>
<b class="t" style="top:367.11px;font-size:10.5px;color:#000;right:538px;transform:scaleX(0.885);transform-origin:100% 0;">281</b>
<b class="t" style="top:367.11px;font-size:10.5px;color:#000;left:412px;transform:scaleX(0.885);transform-origin:0 0;">€/m² MFG</b>
<b class="t" style="top:367.11px;font-size:10.5px;color:#000;right:446.5px;transform:scaleX(0.885);transform-origin:100% 0;">281</b>
<b class="t" style="top:367.11px;font-size:10.5px;color:#000;right:381.5px;transform:scaleX(0.885);transform-origin:100% 0;">250</b>
<b class="t" style="top:367.11px;font-size:10.5px;color:#000;right:277.5px;transform:scaleX(0.885);transform-origin:100% 0;">5.000.000</b>
<b class="t" style="top:367.11px;font-size:10.5px;color:#000;left:677px;transform:translateX(-50%) scaleX(0.885);transform-origin:50% 0;">=</b>
<b class="t" style="top:367.54px;font-size:10px;color:#3564c8;right:12px;transform:scaleX(1.0);transform-origin:100% 0;-webkit-text-stroke:0;">br=ne</b>
<i style="left:681px;top:363px;width:80px;height:2px;background:#000"></i>
<i style="left:681px;top:379px;width:80px;height:2px;background:#000"></i>
<i style="left:681px;top:363px;width:2px;height:18px;background:#000"></i>
<i style="left:759px;top:363px;width:2px;height:18px;background:#000"></i>
<i style="left:683px;top:365px;width:76px;height:14px;background:#fff"></i>
<b class="t" style="top:367.11px;font-size:10.5px;color:#3b64c6;right:187.5px;transform:scaleX(0.885);transform-origin:100% 0;-webkit-text-stroke:0.5px #3b64c6;">5.000.000</b>
<b class="t" style="top:383.11px;font-size:10.5px;color:#000;left:48px;transform:scaleX(0.885);transform-origin:0 0;">Notar/Gericht/GrdEwSt</b>
<b class="t" style="top:383.11px;font-size:10.5px;color:#000;right:716.4px;transform:scaleX(0.96);transform-origin:100% 0;">0,46</b>
<svg style="position:absolute;left:229px;top:384px" width="10" height="10"><rect x="1.3" y="0.4" width="1.6" height="2" fill="#000"/><rect x="6.4" y="5.4" width="1.6" height="2" fill="#000"/><path d="M1 7.6L8.2 0.2" stroke="#000" stroke-width="1.1"/></svg>
<b class="t" style="top:383.11px;font-size:10.5px;color:#3b64c6;right:654.5px;transform:scaleX(0.885);transform-origin:100% 0;-webkit-text-stroke:0.5px #3b64c6;">8,00</b>
<b class="t" style="top:383.11px;font-size:10.5px;color:#000;left:295px;transform:scaleX(0.885);transform-origin:0 0;">%</b>
<b class="t" style="top:383.11px;font-size:10.5px;color:#000;left:324px;transform:translateX(-50%) scaleX(0.95);transform-origin:50% 0;">x</b>
<b class="t" style="top:383.11px;font-size:10.5px;color:#000;right:538px;transform:scaleX(0.885);transform-origin:100% 0;">5.000.000</b>
<b class="t" style="top:383.11px;font-size:10.5px;color:#000;left:412px;transform:scaleX(0.885);transform-origin:0 0;">€</b>
<b class="t" style="top:383.11px;font-size:10.5px;color:#000;right:446.5px;transform:scaleX(0.885);transform-origin:100% 0;">22</b>
<b class="t" style="top:383.11px;font-size:10.5px;color:#000;right:381.5px;transform:scaleX(0.885);transform-origin:100% 0;">20</b>
<b class="t" style="top:383.11px;font-size:10.5px;color:#000;right:277.5px;transform:scaleX(0.885);transform-origin:100% 0;">400.000</b>
<b class="t" style="top:383.11px;font-size:10.5px;color:#000;right:186.5px;transform:scaleX(0.885);transform-origin:100% 0;">400.000</b>
<b class="t" style="top:383.11px;font-size:10.5px;color:#000;left:677px;transform:translateX(-50%) scaleX(0.885);transform-origin:50% 0;">=</b>
<div style="position:absolute;left:774px;top:381px;width:171px;height:15px;overflow:hidden">
<b class="t" style="top:2.96px;font-size:9.5px;color:#3564c8;font-style:italic;left:4px;transform:scaleX(0.905);transform-origin:0 0;-webkit-text-stroke:0;">6,5 % GrErSt + 1,5 % Notar/Gen</b></div>
<b class="t" style="top:383.54px;font-size:10px;color:#3564c8;right:12px;transform:scaleX(1.0);transform-origin:100% 0;-webkit-text-stroke:0;">br=ne</b>
<b class="t" style="top:398.11px;font-size:10.5px;color:#000;left:48px;transform:scaleX(0.885);transform-origin:0 0;">Makler</b>
<b class="t" style="top:398.11px;font-size:10.5px;color:#000;right:716.4px;transform:scaleX(0.96);transform-origin:100% 0;">0,00</b>
<svg style="position:absolute;left:229px;top:399px" width="10" height="10"><rect x="1.3" y="0.4" width="1.6" height="2" fill="#000"/><rect x="6.4" y="5.4" width="1.6" height="2" fill="#000"/><path d="M1 7.6L8.2 0.2" stroke="#000" stroke-width="1.1"/></svg>
<b class="t" style="top:398.11px;font-size:10.5px;color:#3b64c6;right:654.5px;transform:scaleX(0.885);transform-origin:100% 0;-webkit-text-stroke:0.5px #3b64c6;">0,00</b>
<b class="t" style="top:398.11px;font-size:10.5px;color:#000;left:295px;transform:scaleX(0.885);transform-origin:0 0;">%</b>
<b class="t" style="top:398.11px;font-size:10.5px;color:#000;left:324px;transform:translateX(-50%) scaleX(0.95);transform-origin:50% 0;">x</b>
<b class="t" style="top:398.11px;font-size:10.5px;color:#000;right:538px;transform:scaleX(0.885);transform-origin:100% 0;">5.000.000</b>
<b class="t" style="top:398.11px;font-size:10.5px;color:#000;left:412px;transform:scaleX(0.885);transform-origin:0 0;">€</b>
<b class="t" style="top:398.11px;font-size:10.5px;color:#000;right:446.5px;transform:scaleX(0.885);transform-origin:100% 0;">0</b>
<b class="t" style="top:398.11px;font-size:10.5px;color:#000;right:381.5px;transform:scaleX(0.885);transform-origin:100% 0;">0</b>
<b class="t" style="top:398.11px;font-size:10.5px;color:#000;right:277.5px;transform:scaleX(0.885);transform-origin:100% 0;">0</b>
<b class="t" style="top:398.11px;font-size:10.5px;color:#000;right:186.5px;transform:scaleX(0.885);transform-origin:100% 0;">0</b>
<b class="t" style="top:413.11px;font-size:10.5px;color:#000;left:48px;transform:scaleX(0.885);transform-origin:0 0;">ES - Herrichten</b>
<b class="t" style="top:413.11px;font-size:10.5px;color:#000;right:716.4px;transform:scaleX(0.96);transform-origin:100% 0;">0,00</b>
<svg style="position:absolute;left:229px;top:414px" width="10" height="10"><rect x="1.3" y="0.4" width="1.6" height="2" fill="#000"/><rect x="6.4" y="5.4" width="1.6" height="2" fill="#000"/><path d="M1 7.6L8.2 0.2" stroke="#000" stroke-width="1.1"/></svg>
<b class="t" style="top:413.11px;font-size:10.5px;color:#3b64c6;right:654.5px;transform:scaleX(0.885);transform-origin:100% 0;-webkit-text-stroke:0.5px #3b64c6;">0,00</b>
<b class="t" style="top:413.11px;font-size:10.5px;color:#000;left:295px;transform:scaleX(0.885);transform-origin:0 0;">Stk</b>
<b class="t" style="top:413.11px;font-size:10.5px;color:#000;left:324px;transform:translateX(-50%) scaleX(0.95);transform-origin:50% 0;">x</b>
<b class="t" style="top:413.11px;font-size:10.5px;color:#3b64c6;right:538px;transform:scaleX(0.885);transform-origin:100% 0;-webkit-text-stroke:0.5px #3b64c6;">0</b>
<b class="t" style="top:413.11px;font-size:10.5px;color:#000;left:412px;transform:scaleX(0.885);transform-origin:0 0;">€/Stk</b>
<b class="t" style="top:413.11px;font-size:10.5px;color:#000;right:446.5px;transform:scaleX(0.885);transform-origin:100% 0;">0</b>
<b class="t" style="top:413.11px;font-size:10.5px;color:#000;right:381.5px;transform:scaleX(0.885);transform-origin:100% 0;">0</b>
<b class="t" style="top:413.11px;font-size:10.5px;color:#000;right:277.5px;transform:scaleX(0.885);transform-origin:100% 0;">0</b>
<b class="t" style="top:413.11px;font-size:10.5px;color:#000;right:186.5px;transform:scaleX(0.885);transform-origin:100% 0;">0</b>
<b class="t" style="top:428.11px;font-size:10.5px;color:#000;left:48px;transform:scaleX(0.885);transform-origin:0 0;">ES - Altlasten</b>
<b class="t" style="top:428.11px;font-size:10.5px;color:#000;right:716.4px;transform:scaleX(0.96);transform-origin:100% 0;">0,58</b>
<svg style="position:absolute;left:229px;top:429px" width="10" height="10"><rect x="1.3" y="0.4" width="1.6" height="2" fill="#000"/><rect x="6.4" y="5.4" width="1.6" height="2" fill="#000"/><path d="M1 7.6L8.2 0.2" stroke="#000" stroke-width="1.1"/></svg>
<b class="t" style="top:428.11px;font-size:10.5px;color:#3b64c6;right:654.5px;transform:scaleX(0.885);transform-origin:100% 0;-webkit-text-stroke:0.5px #3b64c6;">1,00</b>
<b class="t" style="top:428.11px;font-size:10.5px;color:#000;left:295px;transform:scaleX(0.885);transform-origin:0 0;">Stk</b>
<b class="t" style="top:428.11px;font-size:10.5px;color:#000;left:324px;transform:translateX(-50%) scaleX(0.95);transform-origin:50% 0;">x</b>
<b class="t" style="top:428.11px;font-size:10.5px;color:#3b64c6;right:538px;transform:scaleX(0.885);transform-origin:100% 0;-webkit-text-stroke:0.5px #3b64c6;">500.000</b>
<b class="t" style="top:428.11px;font-size:10.5px;color:#000;left:412px;transform:scaleX(0.885);transform-origin:0 0;">€/Stk</b>
<b class="t" style="top:428.11px;font-size:10.5px;color:#000;right:446.5px;transform:scaleX(0.885);transform-origin:100% 0;">33</b>
<b class="t" style="top:428.11px;font-size:10.5px;color:#000;right:381.5px;transform:scaleX(0.885);transform-origin:100% 0;">25</b>
<b class="t" style="top:428.11px;font-size:10.5px;color:#000;right:277.5px;transform:scaleX(0.885);transform-origin:100% 0;">595.000</b>
<b class="t" style="top:428.11px;font-size:10.5px;color:#000;right:186.5px;transform:scaleX(0.885);transform-origin:100% 0;">500.000</b>
<div style="position:absolute;left:774px;top:426px;width:171px;height:15px;overflow:hidden">
<b class="t" style="top:2.96px;font-size:9.5px;color:#3564c8;font-style:italic;left:4px;transform:scaleX(0.975);transform-origin:0 0;-webkit-text-stroke:0;">Reserveposition</b></div>
<b class="t" style="top:443.11px;font-size:10.5px;color:#000;left:48px;transform:scaleX(0.885);transform-origin:0 0;">ES - Abbruch</b>
<b class="t" style="top:443.11px;font-size:10.5px;color:#000;right:716.4px;transform:scaleX(0.96);transform-origin:100% 0;">0,00</b>
<svg style="position:absolute;left:229px;top:444px" width="10" height="10"><rect x="1.3" y="0.4" width="1.6" height="2" fill="#000"/><rect x="6.4" y="5.4" width="1.6" height="2" fill="#000"/><path d="M1 7.6L8.2 0.2" stroke="#000" stroke-width="1.1"/></svg>
<b class="t" style="top:443.11px;font-size:10.5px;color:#3b64c6;right:654.5px;transform:scaleX(0.885);transform-origin:100% 0;-webkit-text-stroke:0.5px #3b64c6;">0,00</b>
<b class="t" style="top:443.11px;font-size:10.5px;color:#000;left:295px;transform:scaleX(0.885);transform-origin:0 0;">Stk</b>
<b class="t" style="top:443.11px;font-size:10.5px;color:#000;left:324px;transform:translateX(-50%) scaleX(0.95);transform-origin:50% 0;">x</b>
<b class="t" style="top:443.11px;font-size:10.5px;color:#3b64c6;right:538px;transform:scaleX(0.885);transform-origin:100% 0;-webkit-text-stroke:0.5px #3b64c6;">0</b>
<b class="t" style="top:443.11px;font-size:10.5px;color:#000;left:412px;transform:scaleX(0.885);transform-origin:0 0;">€/Stk</b>
<b class="t" style="top:443.11px;font-size:10.5px;color:#000;right:446.5px;transform:scaleX(0.885);transform-origin:100% 0;">0</b>
<b class="t" style="top:443.11px;font-size:10.5px;color:#000;right:381.5px;transform:scaleX(0.885);transform-origin:100% 0;">0</b>
<b class="t" style="top:443.11px;font-size:10.5px;color:#000;right:277.5px;transform:scaleX(0.885);transform-origin:100% 0;">0</b>
<b class="t" style="top:443.11px;font-size:10.5px;color:#000;right:186.5px;transform:scaleX(0.885);transform-origin:100% 0;">0</b>
<b class="t" style="top:458.11px;font-size:10.5px;color:#000;left:48px;transform:scaleX(0.885);transform-origin:0 0;">ES - Erschließung, äußere</b>
<b class="t" style="top:458.11px;font-size:10.5px;color:#000;right:716.4px;transform:scaleX(0.96);transform-origin:100% 0;">0,00</b>
<svg style="position:absolute;left:229px;top:459px" width="10" height="10"><rect x="1.3" y="0.4" width="1.6" height="2" fill="#000"/><rect x="6.4" y="5.4" width="1.6" height="2" fill="#000"/><path d="M1 7.6L8.2 0.2" stroke="#000" stroke-width="1.1"/></svg>
<b class="t" style="top:458.11px;font-size:10.5px;color:#3b64c6;right:654.5px;transform:scaleX(0.885);transform-origin:100% 0;-webkit-text-stroke:0.5px #3b64c6;">0,00</b>
<b class="t" style="top:458.11px;font-size:10.5px;color:#000;left:295px;transform:scaleX(0.885);transform-origin:0 0;">Stk</b>
<b class="t" style="top:458.11px;font-size:10.5px;color:#000;left:324px;transform:translateX(-50%) scaleX(0.95);transform-origin:50% 0;">x</b>
<b class="t" style="top:458.11px;font-size:10.5px;color:#3b64c6;right:538px;transform:scaleX(0.885);transform-origin:100% 0;-webkit-text-stroke:0.5px #3b64c6;">0</b>
<b class="t" style="top:458.11px;font-size:10.5px;color:#000;left:412px;transform:scaleX(0.885);transform-origin:0 0;">€/Stk</b>
<b class="t" style="top:458.11px;font-size:10.5px;color:#000;right:446.5px;transform:scaleX(0.885);transform-origin:100% 0;">0</b>
<b class="t" style="top:458.11px;font-size:10.5px;color:#000;right:381.5px;transform:scaleX(0.885);transform-origin:100% 0;">0</b>
<b class="t" style="top:458.11px;font-size:10.5px;color:#000;right:277.5px;transform:scaleX(0.885);transform-origin:100% 0;">0</b>
<b class="t" style="top:458.11px;font-size:10.5px;color:#000;right:186.5px;transform:scaleX(0.885);transform-origin:100% 0;">0</b>
<b class="t" style="top:473.11px;font-size:10.5px;color:#000;left:48px;transform:scaleX(0.885);transform-origin:0 0;">ES - Sonstiges</b>
<b class="t" style="top:473.11px;font-size:10.5px;color:#000;right:716.4px;transform:scaleX(0.96);transform-origin:100% 0;">0,00</b>
<svg style="position:absolute;left:229px;top:474px" width="10" height="10"><rect x="1.3" y="0.4" width="1.6" height="2" fill="#000"/><rect x="6.4" y="5.4" width="1.6" height="2" fill="#000"/><path d="M1 7.6L8.2 0.2" stroke="#000" stroke-width="1.1"/></svg>
<b class="t" style="top:473.11px;font-size:10.5px;color:#3b64c6;right:654.5px;transform:scaleX(0.885);transform-origin:100% 0;-webkit-text-stroke:0.5px #3b64c6;">0,00</b>
<b class="t" style="top:473.11px;font-size:10.5px;color:#000;left:295px;transform:scaleX(0.885);transform-origin:0 0;">Stk</b>
<b class="t" style="top:473.11px;font-size:10.5px;color:#000;left:324px;transform:translateX(-50%) scaleX(0.95);transform-origin:50% 0;">x</b>
<b class="t" style="top:473.11px;font-size:10.5px;color:#3b64c6;right:538px;transform:scaleX(0.885);transform-origin:100% 0;-webkit-text-stroke:0.5px #3b64c6;">0</b>
<b class="t" style="top:473.11px;font-size:10.5px;color:#000;left:412px;transform:scaleX(0.885);transform-origin:0 0;">€/Stk</b>
<b class="t" style="top:473.11px;font-size:10.5px;color:#000;right:446.5px;transform:scaleX(0.885);transform-origin:100% 0;">0</b>
<b class="t" style="top:473.11px;font-size:10.5px;color:#000;right:381.5px;transform:scaleX(0.885);transform-origin:100% 0;">0</b>
<b class="t" style="top:473.11px;font-size:10.5px;color:#000;right:277.5px;transform:scaleX(0.885);transform-origin:100% 0;">0</b>
<b class="t" style="top:473.11px;font-size:10.5px;color:#000;right:186.5px;transform:scaleX(0.885);transform-origin:100% 0;">0</b>
<b class="t" style="top:488.11px;font-size:10.5px;color:#000;left:22.5px;transform:scaleX(0.885);transform-origin:0 0;">Erschließung</b>
<b class="t" style="top:488.11px;font-size:10.5px;color:#000;right:716.4px;transform:scaleX(0.96);transform-origin:100% 0;">0,17</b>
<svg style="position:absolute;left:229px;top:489px" width="10" height="10"><rect x="1.3" y="0.4" width="1.6" height="2" fill="#000"/><rect x="6.4" y="5.4" width="1.6" height="2" fill="#000"/><path d="M1 7.6L8.2 0.2" stroke="#000" stroke-width="1.1"/></svg>
<b class="t" style="top:488.11px;font-size:10.5px;color:#000;right:446.5px;transform:scaleX(0.885);transform-origin:100% 0;">10</b>
<b class="t" style="top:488.11px;font-size:10.5px;color:#000;right:381.5px;transform:scaleX(0.885);transform-origin:100% 0;">8</b>
<b class="t" style="top:488.11px;font-size:10.5px;color:#000;right:277.5px;transform:scaleX(0.885);transform-origin:100% 0;">178.500</b>
<b class="t" style="top:488.11px;font-size:10.5px;color:#000;right:186.5px;transform:scaleX(0.885);transform-origin:100% 0;">150.000</b>
<i style="left:592px;top:486px;width:0;height:0;background:none;border-top:4px solid #1e8a1e;border-right:4px solid transparent"></i>
<i style="left:683px;top:486px;width:0;height:0;background:none;border-top:4px solid #1e8a1e;border-right:4px solid transparent"></i>
<i style="left:941px;top:501px;width:2px;height:14px;background:#fff"></i>
<b class="t" style="top:503.11px;font-size:10.5px;color:#000;left:48px;transform:scaleX(0.885);transform-origin:0 0;">ES - Innere Erschließung</b>
<b class="t" style="top:503.11px;font-size:10.5px;color:#000;right:716.4px;transform:scaleX(0.96);transform-origin:100% 0;">0,17</b>
<svg style="position:absolute;left:229px;top:504px" width="10" height="10"><rect x="1.3" y="0.4" width="1.6" height="2" fill="#000"/><rect x="6.4" y="5.4" width="1.6" height="2" fill="#000"/><path d="M1 7.6L8.2 0.2" stroke="#000" stroke-width="1.1"/></svg>
<b class="t" style="top:503.11px;font-size:10.5px;color:#3b64c6;right:654.5px;transform:scaleX(0.885);transform-origin:100% 0;-webkit-text-stroke:0.5px #3b64c6;">1,0</b>
<b class="t" style="top:503.11px;font-size:10.5px;color:#000;left:295px;transform:scaleX(0.885);transform-origin:0 0;">Stk</b>
<b class="t" style="top:503.11px;font-size:10.5px;color:#000;left:324px;transform:translateX(-50%) scaleX(0.95);transform-origin:50% 0;">x</b>
<b class="t" style="top:503.11px;font-size:10.5px;color:#3b64c6;right:538px;transform:scaleX(0.885);transform-origin:100% 0;-webkit-text-stroke:0.5px #3b64c6;">150.000</b>
<b class="t" style="top:503.11px;font-size:10.5px;color:#000;left:412px;transform:scaleX(0.885);transform-origin:0 0;">€/Stk</b>
<b class="t" style="top:503.11px;font-size:10.5px;color:#000;right:446.5px;transform:scaleX(0.885);transform-origin:100% 0;">10</b>
<b class="t" style="top:503.11px;font-size:10.5px;color:#000;right:381.5px;transform:scaleX(0.885);transform-origin:100% 0;">8</b>
<b class="t" style="top:503.11px;font-size:10.5px;color:#000;right:277.5px;transform:scaleX(0.885);transform-origin:100% 0;">178.500</b>
<b class="t" style="top:503.11px;font-size:10.5px;color:#000;right:186.5px;transform:scaleX(0.885);transform-origin:100% 0;">150.000</b>
<div style="position:absolute;left:774px;top:501px;width:171px;height:15px;overflow:hidden">
<b class="t" style="top:2.96px;font-size:9.5px;color:#3564c8;font-style:italic;left:4px;transform:scaleX(0.975);transform-origin:0 0;-webkit-text-stroke:0;">pauschal geschätzt - inkl. Leitungsverlegung</b></div>
<b class="t" style="top:518.11px;font-size:10.5px;color:#000;left:48px;transform:scaleX(0.885);transform-origin:0 0;">ES - Hausanschl., Beiträge</b>
<b class="t" style="top:518.11px;font-size:10.5px;color:#000;right:716.4px;transform:scaleX(0.96);transform-origin:100% 0;">0,00</b>
<svg style="position:absolute;left:229px;top:519px" width="10" height="10"><rect x="1.3" y="0.4" width="1.6" height="2" fill="#000"/><rect x="6.4" y="5.4" width="1.6" height="2" fill="#000"/><path d="M1 7.6L8.2 0.2" stroke="#000" stroke-width="1.1"/></svg>
<b class="t" style="top:518.11px;font-size:10.5px;color:#3b64c6;right:654.5px;transform:scaleX(0.885);transform-origin:100% 0;-webkit-text-stroke:0.5px #3b64c6;">0,0</b>
<b class="t" style="top:518.11px;font-size:10.5px;color:#000;left:295px;transform:scaleX(0.885);transform-origin:0 0;">Stk</b>
<b class="t" style="top:518.11px;font-size:10.5px;color:#000;left:324px;transform:translateX(-50%) scaleX(0.95);transform-origin:50% 0;">x</b>
<b class="t" style="top:518.11px;font-size:10.5px;color:#3b64c6;right:538px;transform:scaleX(0.885);transform-origin:100% 0;-webkit-text-stroke:0.5px #3b64c6;">0</b>
<b class="t" style="top:518.11px;font-size:10.5px;color:#000;left:412px;transform:scaleX(0.885);transform-origin:0 0;">€/Stk</b>
<b class="t" style="top:518.11px;font-size:10.5px;color:#000;right:446.5px;transform:scaleX(0.885);transform-origin:100% 0;">0</b>
<b class="t" style="top:518.11px;font-size:10.5px;color:#000;right:381.5px;transform:scaleX(0.885);transform-origin:100% 0;">0</b>
<b class="t" style="top:518.11px;font-size:10.5px;color:#000;right:277.5px;transform:scaleX(0.885);transform-origin:100% 0;">0</b>
<b class="t" style="top:518.11px;font-size:10.5px;color:#000;right:186.5px;transform:scaleX(0.885);transform-origin:100% 0;">0</b>
<i style="left:254px;top:516px;width:0;height:0;background:none;border-top:4px solid #1e8a1e;border-right:4px solid transparent"></i>
<b class="t" style="top:533.11px;font-size:10.5px;color:#000;left:48px;transform:scaleX(0.885);transform-origin:0 0;">Stellplatzablöse</b>
<b class="t" style="top:533.11px;font-size:10.5px;color:#000;right:716.4px;transform:scaleX(0.96);transform-origin:100% 0;">0,00</b>
<svg style="position:absolute;left:229px;top:534px" width="10" height="10"><rect x="1.3" y="0.4" width="1.6" height="2" fill="#000"/><rect x="6.4" y="5.4" width="1.6" height="2" fill="#000"/><path d="M1 7.6L8.2 0.2" stroke="#000" stroke-width="1.1"/></svg>
<b class="t" style="top:533.11px;font-size:10.5px;color:#3b64c6;right:654.5px;transform:scaleX(0.885);transform-origin:100% 0;-webkit-text-stroke:0.5px #3b64c6;">0,0</b>
<b class="t" style="top:533.11px;font-size:10.5px;color:#000;left:295px;transform:scaleX(0.885);transform-origin:0 0;">Stk</b>
<b class="t" style="top:533.11px;font-size:10.5px;color:#000;left:324px;transform:translateX(-50%) scaleX(0.95);transform-origin:50% 0;">x</b>
<b class="t" style="top:533.11px;font-size:10.5px;color:#3b64c6;right:538px;transform:scaleX(0.885);transform-origin:100% 0;-webkit-text-stroke:0.5px #3b64c6;">0</b>
<b class="t" style="top:533.11px;font-size:10.5px;color:#000;left:412px;transform:scaleX(0.885);transform-origin:0 0;">€/Stk</b>
<b class="t" style="top:533.11px;font-size:10.5px;color:#000;right:446.5px;transform:scaleX(0.885);transform-origin:100% 0;">0</b>
<b class="t" style="top:533.11px;font-size:10.5px;color:#000;right:381.5px;transform:scaleX(0.885);transform-origin:100% 0;">0</b>
<b class="t" style="top:533.11px;font-size:10.5px;color:#000;right:277.5px;transform:scaleX(0.885);transform-origin:100% 0;">0</b>
<b class="t" style="top:533.11px;font-size:10.5px;color:#000;right:186.5px;transform:scaleX(0.885);transform-origin:100% 0;">0</b>
<b class="t" style="top:533.11px;font-size:10.5px;color:#000;left:677px;transform:translateX(-50%) scaleX(0.885);transform-origin:50% 0;">=</b>
<div style="position:absolute;left:774px;top:531px;width:171px;height:15px;overflow:hidden">
<b class="t" style="top:2.96px;font-size:9.5px;color:#3564c8;font-style:italic;left:4px;transform:scaleX(0.975);transform-origin:0 0;-webkit-text-stroke:0;">Stellplatznachweis einfordern</b></div>
<b class="t" style="top:533.53px;font-size:10px;color:#3564c8;right:12px;transform:scaleX(1.0);transform-origin:100% 0;-webkit-text-stroke:0;">br=ne</b>
<i style="left:592px;top:531px;width:0;height:0;background:none;border-top:4px solid #1e8a1e;border-right:4px solid transparent"></i>
<b class="t" style="top:548.11px;font-size:10.5px;color:#000;left:48px;transform:scaleX(0.885);transform-origin:0 0;">Sonstiges</b>
<b class="t" style="top:548.11px;font-size:10.5px;color:#000;right:716.4px;transform:scaleX(0.96);transform-origin:100% 0;">0,00</b>
<svg style="position:absolute;left:229px;top:549px" width="10" height="10"><rect x="1.3" y="0.4" width="1.6" height="2" fill="#000"/><rect x="6.4" y="5.4" width="1.6" height="2" fill="#000"/><path d="M1 7.6L8.2 0.2" stroke="#000" stroke-width="1.1"/></svg>
<b class="t" style="top:548.11px;font-size:10.5px;color:#3b64c6;right:654.5px;transform:scaleX(0.885);transform-origin:100% 0;-webkit-text-stroke:0.5px #3b64c6;">0,0</b>
<b class="t" style="top:548.11px;font-size:10.5px;color:#000;left:295px;transform:scaleX(0.885);transform-origin:0 0;">Stk</b>
<b class="t" style="top:548.11px;font-size:10.5px;color:#000;left:324px;transform:translateX(-50%) scaleX(0.95);transform-origin:50% 0;">x</b>
<b class="t" style="top:548.11px;font-size:10.5px;color:#3b64c6;right:538px;transform:scaleX(0.885);transform-origin:100% 0;-webkit-text-stroke:0.5px #3b64c6;">0</b>
<b class="t" style="top:548.11px;font-size:10.5px;color:#000;left:412px;transform:scaleX(0.885);transform-origin:0 0;">€/Stk</b>
<b class="t" style="top:548.11px;font-size:10.5px;color:#000;right:446.5px;transform:scaleX(0.885);transform-origin:100% 0;">0</b>
<b class="t" style="top:548.11px;font-size:10.5px;color:#000;right:381.5px;transform:scaleX(0.885);transform-origin:100% 0;">0</b>
<b class="t" style="top:548.11px;font-size:10.5px;color:#000;right:277.5px;transform:scaleX(0.885);transform-origin:100% 0;">0</b>
<b class="t" style="top:548.11px;font-size:10.5px;color:#000;right:186.5px;transform:scaleX(0.885);transform-origin:100% 0;">0</b>
<b class="t" style="top:563.11px;font-size:10.5px;color:#000;left:22.5px;transform:scaleX(0.885);transform-origin:0 0;">BK - Baukosten</b>
<b class="t" style="top:563.11px;font-size:10.5px;color:#000;right:446.5px;transform:scaleX(0.885);transform-origin:100% 0;">3.676</b>
<b class="t" style="top:563.11px;font-size:10.5px;color:#000;right:381.5px;transform:scaleX(0.885);transform-origin:100% 0;">2.750</b>
<b class="t" style="top:563.11px;font-size:10.5px;color:#000;right:277.5px;transform:scaleX(0.885);transform-origin:100% 0;">65.441.432</b>
<b class="t" style="top:563.11px;font-size:10.5px;color:#000;right:186.5px;transform:scaleX(0.885);transform-origin:100% 0;">54.992.800</b>
<svg style="position:absolute;left:0;top:0" width="945" height="782"><g fill="#000"><rect x="208" y="564" width="1.3" height="7"/><rect x="210" y="564" width="1.3" height="7"/><rect x="207" y="566" width="5" height="1.2"/><rect x="207" y="568" width="5" height="1.2"/><rect x="214" y="564" width="1.3" height="7"/><rect x="216" y="564" width="1.3" height="7"/><rect x="213" y="566" width="5" height="1.2"/><rect x="213" y="568" width="5" height="1.2"/><rect x="220" y="564" width="1.3" height="7"/><rect x="222" y="564" width="1.3" height="7"/><rect x="219" y="566" width="5" height="1.2"/><rect x="219" y="568" width="5" height="1.2"/><rect x="226" y="564" width="1.3" height="7"/><rect x="228" y="564" width="1.3" height="7"/><rect x="225" y="566" width="5" height="1.2"/><rect x="225" y="568" width="5" height="1.2"/><rect x="232" y="564" width="1.3" height="7"/><rect x="234" y="564" width="1.3" height="7"/><rect x="231" y="566" width="5" height="1.2"/><rect x="231" y="568" width="5" height="1.2"/></g></svg>
<b class="t" style="top:578.11px;font-size:10.5px;color:#000;left:48px;transform:scaleX(0.885);transform-origin:0 0;">BK</b>
<b class="t" style="top:578.11px;font-size:10.5px;color:#000;left:74px;transform:scaleX(0.885);transform-origin:0 0;">netto</b>
<b class="t" style="top:578.11px;font-size:10.5px;color:#000;left:112.4px;transform:scaleX(0.885);transform-origin:0 0;">über</b>
<b class="t" style="top:578.11px;font-size:10.5px;color:#000;left:152px;transform:scaleX(0.885);transform-origin:0 0;">BGF ges.</b>
<svg style="position:absolute;left:0;top:0" width="945" height="782"><g fill="#000" transform="translate(156.99 0) skewX(-15)"><rect x="210" y="579" width="1.3" height="7"/><rect x="212" y="579" width="1.3" height="7"/><rect x="209" y="581" width="5" height="1.2"/><rect x="209" y="583" width="5" height="1.2"/><rect x="216" y="579" width="1.3" height="7"/><rect x="218" y="579" width="1.3" height="7"/><rect x="215" y="581" width="5" height="1.2"/><rect x="215" y="583" width="5" height="1.2"/><rect x="222" y="579" width="1.3" height="7"/><rect x="224" y="579" width="1.3" height="7"/><rect x="221" y="581" width="5" height="1.2"/><rect x="221" y="583" width="5" height="1.2"/><rect x="228" y="579" width="1.3" height="7"/><rect x="230" y="579" width="1.3" height="7"/><rect x="227" y="581" width="5" height="1.2"/><rect x="227" y="583" width="5" height="1.2"/></g></svg>
<b class="t" style="top:578.11px;font-size:10.5px;color:#000;font-style:italic;right:655.5px;transform:scaleX(0.885);transform-origin:100% 0;">20.000</b>
<b class="t" style="top:578.11px;font-size:10.5px;color:#000;font-style:italic;left:295px;transform:scaleX(0.885);transform-origin:0 0;">m²</b>
<b class="t" style="top:578.11px;font-size:10.5px;color:#000;left:324px;transform:translateX(-50%) scaleX(0.95);transform-origin:50% 0;">x</b>
<b class="t" style="top:578.11px;font-size:10.5px;color:#000;font-style:italic;right:539.5px;transform:scaleX(0.885);transform-origin:100% 0;">1.800</b>
<b class="t" style="top:578.11px;font-size:10.5px;color:#000;font-style:italic;left:412px;transform:scaleX(0.885);transform-origin:0 0;">€/m²</b>
<b class="t" style="top:578.11px;font-size:10.5px;color:#000;font-style:italic;right:448.0px;transform:scaleX(0.885);transform-origin:100% 0;">2.407</b>
<b class="t" style="top:578.11px;font-size:10.5px;color:#000;font-style:italic;right:383.0px;transform:scaleX(0.885);transform-origin:100% 0;">1.800</b>
<b class="t" style="top:578.11px;font-size:10.5px;color:#000;font-style:italic;right:279.0px;transform:scaleX(0.885);transform-origin:100% 0;">42.840.000</b>
<b class="t" style="top:578.11px;font-size:10.5px;color:#000;font-style:italic;right:188.0px;transform:scaleX(0.885);transform-origin:100% 0;">36.000.000</b>
<div style="position:absolute;left:774px;top:576px;width:171px;height:15px;overflow:hidden">
<b class="t" style="top:2.53px;font-size:10px;color:#3564c8;left:4px;transform:scaleX(0.9);transform-origin:0 0;-webkit-text-stroke:0;">Nur Info. Wird nicht summiert.</b></div>
<b class="t" style="top:593.11px;font-size:10.5px;color:#000;left:48px;transform:scaleX(0.885);transform-origin:0 0;">BK</b>
<b class="t" style="top:593.11px;font-size:10.5px;color:#000;left:74px;transform:scaleX(0.885);transform-origin:0 0;">netto</b>
<b class="t" style="top:593.11px;font-size:10.5px;color:#000;left:112.4px;transform:scaleX(0.885);transform-origin:0 0;">über</b>
<b class="t" style="top:593.11px;font-size:10.5px;color:#000;left:152px;transform:scaleX(0.885);transform-origin:0 0;">BGF A</b>
<b class="t" style="top:593.11px;font-size:10.5px;color:#000;right:716.4px;transform:scaleX(0.96);transform-origin:100% 0;">41,44</b>
<svg style="position:absolute;left:229px;top:594px" width="10" height="10"><rect x="1.3" y="0.4" width="1.6" height="2" fill="#000"/><rect x="6.4" y="5.4" width="1.6" height="2" fill="#000"/><path d="M1 7.6L8.2 0.2" stroke="#000" stroke-width="1.1"/></svg>
<b class="t" style="top:593.11px;font-size:10.5px;color:#3b64c6;right:654.5px;transform:scaleX(0.885);transform-origin:100% 0;-webkit-text-stroke:0.5px #3b64c6;">20.000</b>
<b class="t" style="top:593.11px;font-size:10.5px;color:#000;left:295px;transform:scaleX(0.885);transform-origin:0 0;">m²</b>
<b class="t" style="top:593.11px;font-size:10.5px;color:#000;left:324px;transform:translateX(-50%) scaleX(0.95);transform-origin:50% 0;">x</b>
<b class="t" style="top:593.11px;font-size:10.5px;color:#3b64c6;right:538px;transform:scaleX(0.885);transform-origin:100% 0;-webkit-text-stroke:0.5px #3b64c6;">1.800</b>
<b class="t" style="top:593.11px;font-size:10.5px;color:#000;left:412px;transform:scaleX(0.885);transform-origin:0 0;">€/m²</b>
<b class="t" style="top:593.11px;font-size:10.5px;color:#000;right:446.5px;transform:scaleX(0.885);transform-origin:100% 0;">2.407</b>
<b class="t" style="top:593.11px;font-size:10.5px;color:#000;right:381.5px;transform:scaleX(0.885);transform-origin:100% 0;">1.800</b>
<b class="t" style="top:593.11px;font-size:10.5px;color:#000;right:277.5px;transform:scaleX(0.885);transform-origin:100% 0;">42.840.000</b>
<b class="t" style="top:593.11px;font-size:10.5px;color:#000;right:186.5px;transform:scaleX(0.885);transform-origin:100% 0;">36.000.000</b>
<i style="left:254px;top:591px;width:0;height:0;background:none;border-top:4px solid #1e8a1e;border-right:4px solid transparent"></i>
<b class="t" style="top:608.11px;font-size:10.5px;color:#000;left:48px;transform:scaleX(0.885);transform-origin:0 0;">BK</b>
<b class="t" style="top:608.11px;font-size:10.5px;color:#000;left:74px;transform:scaleX(0.885);transform-origin:0 0;">netto</b>
<b class="t" style="top:608.11px;font-size:10.5px;color:#000;left:112.4px;transform:scaleX(0.885);transform-origin:0 0;">über</b>
<b class="t" style="top:608.11px;font-size:10.5px;color:#000;left:152px;transform:scaleX(0.885);transform-origin:0 0;">BGF B</b>
<b class="t" style="top:608.11px;font-size:10.5px;color:#000;right:716.4px;transform:scaleX(0.96);transform-origin:100% 0;">0,00</b>
<svg style="position:absolute;left:229px;top:609px" width="10" height="10"><rect x="1.3" y="0.4" width="1.6" height="2" fill="#000"/><rect x="6.4" y="5.4" width="1.6" height="2" fill="#000"/><path d="M1 7.6L8.2 0.2" stroke="#000" stroke-width="1.1"/></svg>
<b class="t" style="top:608.11px;font-size:10.5px;color:#3b64c6;right:654.5px;transform:scaleX(0.885);transform-origin:100% 0;-webkit-text-stroke:0.5px #3b64c6;">0</b>
<b class="t" style="top:608.11px;font-size:10.5px;color:#000;left:295px;transform:scaleX(0.885);transform-origin:0 0;">m²</b>
<b class="t" style="top:608.11px;font-size:10.5px;color:#000;left:324px;transform:translateX(-50%) scaleX(0.95);transform-origin:50% 0;">x</b>
<b class="t" style="top:608.11px;font-size:10.5px;color:#3b64c6;right:538px;transform:scaleX(0.885);transform-origin:100% 0;-webkit-text-stroke:0.5px #3b64c6;">2.000</b>
<b class="t" style="top:608.11px;font-size:10.5px;color:#000;left:412px;transform:scaleX(0.885);transform-origin:0 0;">€/m²</b>
<b class="t" style="top:608.11px;font-size:10.5px;color:#000;right:446.5px;transform:scaleX(0.885);transform-origin:100% 0;">0</b>
<b class="t" style="top:608.11px;font-size:10.5px;color:#000;right:381.5px;transform:scaleX(0.885);transform-origin:100% 0;">0</b>
<b class="t" style="top:608.11px;font-size:10.5px;color:#000;right:277.5px;transform:scaleX(0.885);transform-origin:100% 0;">0</b>
<b class="t" style="top:608.11px;font-size:10.5px;color:#000;right:186.5px;transform:scaleX(0.885);transform-origin:100% 0;">0</b>
<b class="t" style="top:623.11px;font-size:10.5px;color:#000;left:48px;transform:scaleX(0.885);transform-origin:0 0;">BK</b>
<b class="t" style="top:623.11px;font-size:10.5px;color:#000;left:74px;transform:scaleX(0.885);transform-origin:0 0;">netto</b>
<b class="t" style="top:623.11px;font-size:10.5px;color:#000;left:112.4px;transform:scaleX(0.885);transform-origin:0 0;">über</b>
<b class="t" style="top:623.11px;font-size:10.5px;color:#000;left:152px;transform:scaleX(0.885);transform-origin:0 0;">BGF C</b>
<b class="t" style="top:623.11px;font-size:10.5px;color:#000;right:716.4px;transform:scaleX(0.96);transform-origin:100% 0;">0,00</b>
<svg style="position:absolute;left:229px;top:624px" width="10" height="10"><rect x="1.3" y="0.4" width="1.6" height="2" fill="#000"/><rect x="6.4" y="5.4" width="1.6" height="2" fill="#000"/><path d="M1 7.6L8.2 0.2" stroke="#000" stroke-width="1.1"/></svg>
<b class="t" style="top:623.11px;font-size:10.5px;color:#3b64c6;right:654.5px;transform:scaleX(0.885);transform-origin:100% 0;-webkit-text-stroke:0.5px #3b64c6;">0</b>
<b class="t" style="top:623.11px;font-size:10.5px;color:#000;left:295px;transform:scaleX(0.885);transform-origin:0 0;">m²</b>
<b class="t" style="top:623.11px;font-size:10.5px;color:#000;left:324px;transform:translateX(-50%) scaleX(0.95);transform-origin:50% 0;">x</b>
<b class="t" style="top:623.11px;font-size:10.5px;color:#3b64c6;right:538px;transform:scaleX(0.885);transform-origin:100% 0;-webkit-text-stroke:0.5px #3b64c6;">0</b>
<b class="t" style="top:623.11px;font-size:10.5px;color:#000;left:412px;transform:scaleX(0.885);transform-origin:0 0;">€/m²</b>
<b class="t" style="top:623.11px;font-size:10.5px;color:#000;right:446.5px;transform:scaleX(0.885);transform-origin:100% 0;">0</b>
<b class="t" style="top:623.11px;font-size:10.5px;color:#000;right:381.5px;transform:scaleX(0.885);transform-origin:100% 0;">0</b>
<b class="t" style="top:623.11px;font-size:10.5px;color:#000;right:277.5px;transform:scaleX(0.885);transform-origin:100% 0;">0</b>
<b class="t" style="top:623.11px;font-size:10.5px;color:#000;right:186.5px;transform:scaleX(0.885);transform-origin:100% 0;">0</b>
<b class="t" style="top:638.11px;font-size:10.5px;color:#000;left:48px;transform:scaleX(0.885);transform-origin:0 0;">BK</b>
<b class="t" style="top:638.11px;font-size:10.5px;color:#000;left:74px;transform:scaleX(0.885);transform-origin:0 0;">brutto</b>
<b class="t" style="top:638.11px;font-size:10.5px;color:#000;left:112.4px;transform:scaleX(0.885);transform-origin:0 0;">über</b>
<b class="t" style="top:638.11px;font-size:10.5px;color:#000;left:152px;transform:scaleX(0.885);transform-origin:0 0;">MFG ges.</b>
<b class="t" style="top:638.11px;font-size:10.5px;color:#000;right:716.4px;transform:scaleX(0.96);transform-origin:100% 0;">0,00</b>
<svg style="position:absolute;left:229px;top:639px" width="10" height="10"><rect x="1.3" y="0.4" width="1.6" height="2" fill="#000"/><rect x="6.4" y="5.4" width="1.6" height="2" fill="#000"/><path d="M1 7.6L8.2 0.2" stroke="#000" stroke-width="1.1"/></svg>
<b class="t" style="top:638.11px;font-size:10.5px;color:#000;right:654.5px;transform:scaleX(0.885);transform-origin:100% 0;">17.800</b>
<b class="t" style="top:638.11px;font-size:10.5px;color:#000;left:295px;transform:scaleX(0.885);transform-origin:0 0;">m²</b>
<b class="t" style="top:638.11px;font-size:10.5px;color:#000;left:324px;transform:translateX(-50%) scaleX(0.95);transform-origin:50% 0;">x</b>
<b class="t" style="top:638.11px;font-size:10.5px;color:#000;right:538px;transform:scaleX(0.885);transform-origin:100% 0;">2.407</b>
<b class="t" style="top:638.11px;font-size:10.5px;color:#000;left:412px;transform:scaleX(0.885);transform-origin:0 0;">€/m² br.</b>
<b class="t" style="top:653.11px;font-size:10.5px;color:#000;left:48px;transform:scaleX(0.885);transform-origin:0 0;">BK</b>
<b class="t" style="top:653.11px;font-size:10.5px;color:#000;left:74px;transform:scaleX(0.885);transform-origin:0 0;">brutto</b>
<b class="t" style="top:653.11px;font-size:10.5px;color:#000;left:112.4px;transform:scaleX(0.885);transform-origin:0 0;">über</b>
<b class="t" style="top:653.11px;font-size:10.5px;color:#000;left:152px;transform:scaleX(0.885);transform-origin:0 0;">UR ges.</b>
<b class="t" style="top:653.11px;font-size:10.5px;color:#000;right:716.4px;transform:scaleX(0.96);transform-origin:100% 0;">0,00</b>
<svg style="position:absolute;left:229px;top:654px" width="10" height="10"><rect x="1.3" y="0.4" width="1.6" height="2" fill="#000"/><rect x="6.4" y="5.4" width="1.6" height="2" fill="#000"/><path d="M1 7.6L8.2 0.2" stroke="#000" stroke-width="1.1"/></svg>
<b class="t" style="top:653.11px;font-size:10.5px;color:#000;right:654.5px;transform:scaleX(0.885);transform-origin:100% 0;">103.240</b>
<b class="t" style="top:653.11px;font-size:10.5px;color:#000;left:295px;transform:scaleX(0.885);transform-origin:0 0;">m³</b>
<b class="t" style="top:653.11px;font-size:10.5px;color:#000;left:324px;transform:translateX(-50%) scaleX(0.95);transform-origin:50% 0;">x</b>
<b class="t" style="top:653.11px;font-size:10.5px;color:#000;right:538px;transform:scaleX(0.885);transform-origin:100% 0;">415</b>
<b class="t" style="top:653.11px;font-size:10.5px;color:#000;left:412px;transform:scaleX(0.885);transform-origin:0 0;">€/m³ br.</b>
<b class="t" style="top:668.11px;font-size:10.5px;color:#000;left:48px;transform:scaleX(0.885);transform-origin:0 0;">Sonderbauteile</b>
<b class="t" style="top:668.11px;font-size:10.5px;color:#000;right:716.4px;transform:scaleX(0.96);transform-origin:100% 0;">3,45</b>
<svg style="position:absolute;left:229px;top:669px" width="10" height="10"><rect x="1.3" y="0.4" width="1.6" height="2" fill="#000"/><rect x="6.4" y="5.4" width="1.6" height="2" fill="#000"/><path d="M1 7.6L8.2 0.2" stroke="#000" stroke-width="1.1"/></svg>
<b class="t" style="top:668.11px;font-size:10.5px;color:#3b64c6;right:654.5px;transform:scaleX(0.885);transform-origin:100% 0;-webkit-text-stroke:0.5px #3b64c6;">1,00</b>
<b class="t" style="top:668.11px;font-size:10.5px;color:#000;left:295px;transform:scaleX(0.885);transform-origin:0 0;">Stk</b>
<b class="t" style="top:668.11px;font-size:10.5px;color:#000;left:324px;transform:translateX(-50%) scaleX(0.95);transform-origin:50% 0;">x</b>
<b class="t" style="top:668.11px;font-size:10.5px;color:#3b64c6;right:538px;transform:scaleX(0.885);transform-origin:100% 0;-webkit-text-stroke:0.5px #3b64c6;">3.000.000</b>
<b class="t" style="top:668.11px;font-size:10.5px;color:#000;left:412px;transform:scaleX(0.885);transform-origin:0 0;">€/Stk</b>
<b class="t" style="top:668.11px;font-size:10.5px;color:#000;right:446.5px;transform:scaleX(0.885);transform-origin:100% 0;">201</b>
<b class="t" style="top:668.11px;font-size:10.5px;color:#000;right:381.5px;transform:scaleX(0.885);transform-origin:100% 0;">150</b>
<b class="t" style="top:668.11px;font-size:10.5px;color:#000;right:277.5px;transform:scaleX(0.885);transform-origin:100% 0;">3.570.000</b>
<b class="t" style="top:668.11px;font-size:10.5px;color:#000;right:186.5px;transform:scaleX(0.885);transform-origin:100% 0;">3.000.000</b>
<div style="position:absolute;left:774px;top:666px;width:171px;height:15px;overflow:hidden">
<b class="t" style="top:2.96px;font-size:9.5px;color:#3564c8;font-style:italic;left:4px;transform:scaleX(0.975);transform-origin:0 0;-webkit-text-stroke:0;">Sondergründung/Verbau</b></div>
<b class="t" style="top:683.11px;font-size:10.5px;color:#000;left:48px;transform:scaleX(0.885);transform-origin:0 0;">SPTG</b>
<b class="t" style="top:698.11px;font-size:10.5px;color:#000;left:48px;transform:scaleX(0.885);transform-origin:0 0;">SPG</b>
<b class="t" style="top:713.11px;font-size:10.5px;color:#000;left:48px;transform:scaleX(0.885);transform-origin:0 0;">SPA</b>
<b class="t" style="top:683.11px;font-size:10.5px;color:#000;left:87.3px;transform:scaleX(0.885);transform-origin:0 0;">Stellplätze-Tiefgarage</b>
<b class="t" style="top:683.11px;font-size:10.5px;color:#000;right:716.4px;transform:scaleX(0.96);transform-origin:100% 0;">13,67</b>
<svg style="position:absolute;left:229px;top:684px" width="10" height="10"><rect x="1.3" y="0.4" width="1.6" height="2" fill="#000"/><rect x="6.4" y="5.4" width="1.6" height="2" fill="#000"/><path d="M1 7.6L8.2 0.2" stroke="#000" stroke-width="1.1"/></svg>
<b class="t" style="top:683.11px;font-size:10.5px;color:#000;right:654.5px;transform:scaleX(0.885);transform-origin:100% 0;">396</b>
<b class="t" style="top:683.11px;font-size:10.5px;color:#000;left:295px;transform:scaleX(0.885);transform-origin:0 0;">Stk</b>
<b class="t" style="top:683.11px;font-size:10.5px;color:#000;left:324px;transform:translateX(-50%) scaleX(0.95);transform-origin:50% 0;">x</b>
<b class="t" style="top:683.11px;font-size:10.5px;color:#3b64c6;right:538px;transform:scaleX(0.885);transform-origin:100% 0;-webkit-text-stroke:0.5px #3b64c6;">30.000</b>
<b class="t" style="top:683.11px;font-size:10.5px;color:#000;left:412px;transform:scaleX(0.885);transform-origin:0 0;">€/Stk</b>
<b class="t" style="top:683.11px;font-size:10.5px;color:#000;right:446.5px;transform:scaleX(0.885);transform-origin:100% 0;">794</b>
<b class="t" style="top:683.11px;font-size:10.5px;color:#000;right:381.5px;transform:scaleX(0.885);transform-origin:100% 0;">594</b>
<b class="t" style="top:683.11px;font-size:10.5px;color:#000;right:277.5px;transform:scaleX(0.885);transform-origin:100% 0;">14.137.200</b>
<b class="t" style="top:683.11px;font-size:10.5px;color:#000;right:186.5px;transform:scaleX(0.885);transform-origin:100% 0;">11.880.000</b>
<div style="position:absolute;left:774px;top:681px;width:171px;height:15px;overflow:hidden">
<b class="t" style="top:2.96px;font-size:9.5px;color:#3564c8;font-style:italic;left:4px;transform:scaleX(0.975);transform-origin:0 0;-webkit-text-stroke:0;">inkl. Erdarbeiten</b></div>
<b class="t" style="top:698.11px;font-size:10.5px;color:#000;left:87.3px;transform:scaleX(0.885);transform-origin:0 0;">Stellplätze-Garagen</b>
<b class="t" style="top:698.11px;font-size:10.5px;color:#000;right:716.4px;transform:scaleX(0.96);transform-origin:100% 0;">0,00</b>
<svg style="position:absolute;left:229px;top:699px" width="10" height="10"><rect x="1.3" y="0.4" width="1.6" height="2" fill="#000"/><rect x="6.4" y="5.4" width="1.6" height="2" fill="#000"/><path d="M1 7.6L8.2 0.2" stroke="#000" stroke-width="1.1"/></svg>
<b class="t" style="top:698.11px;font-size:10.5px;color:#000;right:654.5px;transform:scaleX(0.885);transform-origin:100% 0;">0</b>
<b class="t" style="top:698.11px;font-size:10.5px;color:#000;left:295px;transform:scaleX(0.885);transform-origin:0 0;">Stk</b>
<b class="t" style="top:698.11px;font-size:10.5px;color:#000;left:324px;transform:translateX(-50%) scaleX(0.95);transform-origin:50% 0;">x</b>
<b class="t" style="top:698.11px;font-size:10.5px;color:#3b64c6;right:538px;transform:scaleX(0.885);transform-origin:100% 0;-webkit-text-stroke:0.5px #3b64c6;">0</b>
<b class="t" style="top:698.11px;font-size:10.5px;color:#000;left:412px;transform:scaleX(0.885);transform-origin:0 0;">€/Stk</b>
<b class="t" style="top:698.11px;font-size:10.5px;color:#000;right:446.5px;transform:scaleX(0.885);transform-origin:100% 0;">0</b>
<b class="t" style="top:698.11px;font-size:10.5px;color:#000;right:381.5px;transform:scaleX(0.885);transform-origin:100% 0;">0</b>
<b class="t" style="top:698.11px;font-size:10.5px;color:#000;right:277.5px;transform:scaleX(0.885);transform-origin:100% 0;">0</b>
<b class="t" style="top:698.11px;font-size:10.5px;color:#000;right:186.5px;transform:scaleX(0.885);transform-origin:100% 0;">0</b>
<b class="t" style="top:713.11px;font-size:10.5px;color:#000;left:87.3px;transform:scaleX(0.885);transform-origin:0 0;">Stellplätze-Außen</b>
<b class="t" style="top:713.11px;font-size:10.5px;color:#000;right:716.4px;transform:scaleX(0.96);transform-origin:100% 0;">0,00</b>
<svg style="position:absolute;left:229px;top:714px" width="10" height="10"><rect x="1.3" y="0.4" width="1.6" height="2" fill="#000"/><rect x="6.4" y="5.4" width="1.6" height="2" fill="#000"/><path d="M1 7.6L8.2 0.2" stroke="#000" stroke-width="1.1"/></svg>
<b class="t" style="top:713.11px;font-size:10.5px;color:#000;right:654.5px;transform:scaleX(0.885);transform-origin:100% 0;">0</b>
<b class="t" style="top:713.11px;font-size:10.5px;color:#000;left:295px;transform:scaleX(0.885);transform-origin:0 0;">Stk</b>
<b class="t" style="top:713.11px;font-size:10.5px;color:#000;left:324px;transform:translateX(-50%) scaleX(0.95);transform-origin:50% 0;">x</b>
<b class="t" style="top:713.11px;font-size:10.5px;color:#3b64c6;right:538px;transform:scaleX(0.885);transform-origin:100% 0;-webkit-text-stroke:0.5px #3b64c6;">0</b>
<b class="t" style="top:713.11px;font-size:10.5px;color:#000;left:412px;transform:scaleX(0.885);transform-origin:0 0;">€/Stk</b>
<b class="t" style="top:713.11px;font-size:10.5px;color:#000;right:446.5px;transform:scaleX(0.885);transform-origin:100% 0;">0</b>
<b class="t" style="top:713.11px;font-size:10.5px;color:#000;right:381.5px;transform:scaleX(0.885);transform-origin:100% 0;">0</b>
<b class="t" style="top:713.11px;font-size:10.5px;color:#000;right:277.5px;transform:scaleX(0.885);transform-origin:100% 0;">0</b>
<b class="t" style="top:713.11px;font-size:10.5px;color:#000;right:186.5px;transform:scaleX(0.885);transform-origin:100% 0;">0</b>
<b class="t" style="top:728.11px;font-size:10.5px;color:#000;left:48px;transform:scaleX(0.885);transform-origin:0 0;">Außenanlagen/Freiflächen</b>
<b class="t" style="top:728.11px;font-size:10.5px;color:#000;right:716.4px;transform:scaleX(0.96);transform-origin:100% 0;">1,15</b>
<svg style="position:absolute;left:229px;top:729px" width="10" height="10"><rect x="1.3" y="0.4" width="1.6" height="2" fill="#000"/><rect x="6.4" y="5.4" width="1.6" height="2" fill="#000"/><path d="M1 7.6L8.2 0.2" stroke="#000" stroke-width="1.1"/></svg>
<b class="t" style="top:728.11px;font-size:10.5px;color:#000;right:654.5px;transform:scaleX(0.885);transform-origin:100% 0;">1</b>
<b class="t" style="top:728.11px;font-size:10.5px;color:#000;left:295px;transform:scaleX(0.885);transform-origin:0 0;">m²</b>
<b class="t" style="top:728.11px;font-size:10.5px;color:#000;left:324px;transform:translateX(-50%) scaleX(0.95);transform-origin:50% 0;">x</b>
<b class="t" style="top:728.11px;font-size:10.5px;color:#3b64c6;right:538px;transform:scaleX(0.885);transform-origin:100% 0;-webkit-text-stroke:0.5px #3b64c6;">1.000.000</b>
<b class="t" style="top:728.11px;font-size:10.5px;color:#000;left:412px;transform:scaleX(0.885);transform-origin:0 0;">€/m²</b>
<b class="t" style="top:728.11px;font-size:10.5px;color:#000;right:446.5px;transform:scaleX(0.885);transform-origin:100% 0;">67</b>
<b class="t" style="top:728.11px;font-size:10.5px;color:#000;right:381.5px;transform:scaleX(0.885);transform-origin:100% 0;">50</b>
<b class="t" style="top:728.11px;font-size:10.5px;color:#000;right:277.5px;transform:scaleX(0.885);transform-origin:100% 0;">1.190.000</b>
<b class="t" style="top:728.11px;font-size:10.5px;color:#000;right:186.5px;transform:scaleX(0.885);transform-origin:100% 0;">1.000.000</b>
<div style="position:absolute;left:774px;top:726px;width:171px;height:15px;overflow:hidden">
<b class="t" style="top:2.96px;font-size:9.5px;color:#3564c8;font-style:italic;left:4px;transform:scaleX(0.975);transform-origin:0 0;-webkit-text-stroke:0;">pauschal geschätzt</b></div>
<b class="t" style="top:743.11px;font-size:10.5px;color:#000;left:48px;transform:scaleX(0.885);transform-origin:0 0;">Sonstiges</b>
<b class="t" style="top:743.11px;font-size:10.5px;color:#000;right:716.4px;transform:scaleX(0.96);transform-origin:100% 0;">0,00</b>
<svg style="position:absolute;left:229px;top:744px" width="10" height="10"><rect x="1.3" y="0.4" width="1.6" height="2" fill="#000"/><rect x="6.4" y="5.4" width="1.6" height="2" fill="#000"/><path d="M1 7.6L8.2 0.2" stroke="#000" stroke-width="1.1"/></svg>
<b class="t" style="top:743.11px;font-size:10.5px;color:#3b64c6;right:654.5px;transform:scaleX(0.885);transform-origin:100% 0;-webkit-text-stroke:0.5px #3b64c6;">0,00</b>
<b class="t" style="top:743.11px;font-size:10.5px;color:#000;left:295px;transform:scaleX(0.885);transform-origin:0 0;">Stk</b>
<b class="t" style="top:743.11px;font-size:10.5px;color:#000;left:324px;transform:translateX(-50%) scaleX(0.95);transform-origin:50% 0;">x</b>
<b class="t" style="top:743.11px;font-size:10.5px;color:#3b64c6;right:538px;transform:scaleX(0.885);transform-origin:100% 0;-webkit-text-stroke:0.5px #3b64c6;">0</b>
<b class="t" style="top:743.11px;font-size:10.5px;color:#000;left:412px;transform:scaleX(0.885);transform-origin:0 0;">€/Stk</b>
<b class="t" style="top:743.11px;font-size:10.5px;color:#000;right:446.5px;transform:scaleX(0.885);transform-origin:100% 0;">0</b>
<b class="t" style="top:743.11px;font-size:10.5px;color:#000;right:381.5px;transform:scaleX(0.885);transform-origin:100% 0;">0</b>
<b class="t" style="top:743.11px;font-size:10.5px;color:#000;right:277.5px;transform:scaleX(0.885);transform-origin:100% 0;">0</b>
<b class="t" style="top:743.11px;font-size:10.5px;color:#000;right:186.5px;transform:scaleX(0.885);transform-origin:100% 0;">0</b>
<b class="t" style="top:758.11px;font-size:10.5px;color:#000;left:48px;transform:scaleX(0.885);transform-origin:0 0;">UVG - Unvorhergesehenes</b>
<b class="t" style="top:758.11px;font-size:10.5px;color:#000;right:716.4px;transform:scaleX(0.96);transform-origin:100% 0;">2,99</b>
<svg style="position:absolute;left:229px;top:759px" width="10" height="10"><rect x="1.3" y="0.4" width="1.6" height="2" fill="#000"/><rect x="6.4" y="5.4" width="1.6" height="2" fill="#000"/><path d="M1 7.6L8.2 0.2" stroke="#000" stroke-width="1.1"/></svg>
<b class="t" style="top:758.11px;font-size:10.5px;color:#3b64c6;right:654.5px;transform:scaleX(0.885);transform-origin:100% 0;-webkit-text-stroke:0.5px #3b64c6;">5,00</b>
<b class="t" style="top:758.11px;font-size:10.5px;color:#000;left:295px;transform:scaleX(0.885);transform-origin:0 0;">%</b>
<b class="t" style="top:758.11px;font-size:10.5px;color:#000;left:324px;transform:translateX(-50%) scaleX(0.95);transform-origin:50% 0;">x</b>
<b class="t" style="top:758.11px;font-size:10.5px;color:#000;right:538px;transform:scaleX(0.885);transform-origin:100% 0;">51.880.000</b>
<b class="t" style="top:758.11px;font-size:10.5px;color:#000;left:412px;transform:scaleX(0.885);transform-origin:0 0;">€</b>
<b class="t" style="top:758.11px;font-size:10.5px;color:#000;right:446.5px;transform:scaleX(0.885);transform-origin:100% 0;">173</b>
<b class="t" style="top:758.11px;font-size:10.5px;color:#000;right:381.5px;transform:scaleX(0.885);transform-origin:100% 0;">130</b>
<b class="t" style="top:758.11px;font-size:10.5px;color:#000;right:277.5px;transform:scaleX(0.885);transform-origin:100% 0;">3.086.860</b>
<b class="t" style="top:758.11px;font-size:10.5px;color:#000;right:186.5px;transform:scaleX(0.885);transform-origin:100% 0;">2.594.000</b>
<div style="position:absolute;left:774px;top:756px;width:171px;height:15px;overflow:hidden">
<b class="t" style="top:2.53px;font-size:10px;color:#3564c8;left:4px;transform:scaleX(0.9);transform-origin:0 0;-webkit-text-stroke:0;">von BK ./. (UVG + GLR)</b></div>
<b class="t" style="top:773.11px;font-size:10.5px;color:#000;left:48px;transform:scaleX(0.885);transform-origin:0 0;">GLR - Gewährleist.rücklagen</b>
<b class="t" style="top:773.11px;font-size:10.5px;color:#000;right:716.4px;transform:scaleX(0.96);transform-origin:100% 0;">0,60</b>
<svg style="position:absolute;left:229px;top:774px" width="10" height="10"><rect x="1.3" y="0.4" width="1.6" height="2" fill="#000"/><rect x="6.4" y="5.4" width="1.6" height="2" fill="#000"/><path d="M1 7.6L8.2 0.2" stroke="#000" stroke-width="1.1"/></svg>
<b class="t" style="top:773.11px;font-size:10.5px;color:#3b64c6;right:654.5px;transform:scaleX(0.885);transform-origin:100% 0;-webkit-text-stroke:0.5px #3b64c6;">1,00</b>
<b class="t" style="top:773.11px;font-size:10.5px;color:#000;left:295px;transform:scaleX(0.885);transform-origin:0 0;">%</b>
<b class="t" style="top:773.11px;font-size:10.5px;color:#000;left:324px;transform:translateX(-50%) scaleX(0.95);transform-origin:50% 0;">x</b>
<b class="t" style="top:773.11px;font-size:10.5px;color:#000;right:538px;transform:scaleX(0.885);transform-origin:100% 0;">51.880.000</b>
<b class="t" style="top:773.11px;font-size:10.5px;color:#000;left:412px;transform:scaleX(0.885);transform-origin:0 0;">€</b>
<b class="t" style="top:773.11px;font-size:10.5px;color:#000;right:446.5px;transform:scaleX(0.885);transform-origin:100% 0;">35</b>
<b class="t" style="top:773.11px;font-size:10.5px;color:#000;right:381.5px;transform:scaleX(0.885);transform-origin:100% 0;">26</b>
<b class="t" style="top:773.11px;font-size:10.5px;color:#000;right:277.5px;transform:scaleX(0.885);transform-origin:100% 0;">617.372</b>
<b class="t" style="top:773.11px;font-size:10.5px;color:#000;right:186.5px;transform:scaleX(0.885);transform-origin:100% 0;">518.800</b>
<div style="position:absolute;left:774px;top:771px;width:171px;height:15px;overflow:hidden">
<b class="t" style="top:2.53px;font-size:10px;color:#3564c8;left:4px;transform:scaleX(0.9);transform-origin:0 0;-webkit-text-stroke:0;">von BK ./. (UVG + GLR)</b></div>
<i style="left:0px;top:0px;width:945px;height:14px;background:#e6e6e6"></i>
<i style="left:0px;top:0px;width:19px;height:782px;background:#e6e6e6"></i>
<i style="left:0px;top:14px;width:945px;height:1px;background:#9e9e9e"></i>
<i style="left:19px;top:0px;width:1px;height:782px;background:#9e9e9e"></i>
<i style="left:11px;top:6px;width:0;height:0;background:none;border-bottom:6px solid #c2c2c2;border-left:6px solid transparent"></i>
<i style="left:32px;top:1px;width:1px;height:13px;background:#b4b4b4"></i>
<div class="ch" style="left:20px;width:12px">A</div>
<i style="left:45px;top:1px;width:1px;height:13px;background:#b4b4b4"></i>
<div class="ch" style="left:33px;width:12px">B</div>
<i style="left:58px;top:1px;width:1px;height:13px;background:#b4b4b4"></i>
<div class="ch" style="left:46px;width:12px">C</div>
<i style="left:71px;top:1px;width:1px;height:13px;background:#b4b4b4"></i>
<div class="ch" style="left:59px;width:12px">D</div>
<i style="left:84px;top:1px;width:1px;height:13px;background:#b4b4b4"></i>
<div class="ch" style="left:72px;width:12px">E</div>
<i style="left:97px;top:1px;width:1px;height:13px;background:#b4b4b4"></i>
<div class="ch" style="left:85px;width:12px">F</div>
<i style="left:110px;top:1px;width:1px;height:13px;background:#b4b4b4"></i>
<div class="ch" style="left:98px;width:12px">G</div>
<i style="left:123px;top:1px;width:1px;height:13px;background:#b4b4b4"></i>
<div class="ch" style="left:111px;width:12px">H</div>
<i style="left:136px;top:1px;width:1px;height:13px;background:#b4b4b4"></i>
<div class="ch" style="left:124px;width:12px">I</div>
<i style="left:149px;top:1px;width:1px;height:13px;background:#b4b4b4"></i>
<div class="ch" style="left:137px;width:12px">J</div>
<i style="left:162px;top:1px;width:1px;height:13px;background:#b4b4b4"></i>
<div class="ch" style="left:150px;width:12px">K</div>
<i style="left:175px;top:1px;width:1px;height:13px;background:#b4b4b4"></i>
<div class="ch" style="left:163px;width:12px">L</div>
<i style="left:188px;top:1px;width:1px;height:13px;background:#b4b4b4"></i>
<div class="ch" style="left:176px;width:12px">M</div>
<i style="left:201px;top:1px;width:1px;height:13px;background:#b4b4b4"></i>
<div class="ch" style="left:189px;width:12px">N</div>
<i style="left:214px;top:1px;width:1px;height:13px;background:#b4b4b4"></i>
<div class="ch" style="left:202px;width:12px">O</div>
<i style="left:227px;top:1px;width:1px;height:13px;background:#b4b4b4"></i>
<div class="ch" style="left:215px;width:12px">P</div>
<i style="left:240px;top:1px;width:1px;height:13px;background:#b4b4b4"></i>
<div class="ch" style="left:228px;width:12px">Q</div>
<i style="left:253px;top:1px;width:1px;height:13px;background:#b4b4b4"></i>
<div class="ch" style="left:241px;width:12px">R</div>
<i style="left:266px;top:1px;width:1px;height:13px;background:#b4b4b4"></i>
<div class="ch" style="left:254px;width:12px">S</div>
<i style="left:279px;top:1px;width:1px;height:13px;background:#b4b4b4"></i>
<div class="ch" style="left:267px;width:12px">T</div>
<i style="left:292px;top:1px;width:1px;height:13px;background:#b4b4b4"></i>
<div class="ch" style="left:280px;width:12px">U</div>
<i style="left:305px;top:1px;width:1px;height:13px;background:#b4b4b4"></i>
<div class="ch" style="left:293px;width:12px">V</div>
<i style="left:318px;top:1px;width:1px;height:13px;background:#b4b4b4"></i>
<div class="ch" style="left:306px;width:12px">W</div>
<i style="left:331px;top:1px;width:1px;height:13px;background:#b4b4b4"></i>
<div class="ch" style="left:319px;width:12px">X</div>
<i style="left:344px;top:1px;width:1px;height:13px;background:#b4b4b4"></i>
<div class="ch" style="left:332px;width:12px">Y</div>
<i style="left:357px;top:1px;width:1px;height:13px;background:#b4b4b4"></i>
<div class="ch" style="left:345px;width:12px">Z</div>
<i style="left:370px;top:1px;width:1px;height:13px;background:#b4b4b4"></i>
<div class="ch" style="left:358px;width:12px;text-align:left;letter-spacing:0"><span style="position:relative;left:0px">AA</span></div>
<i style="left:383px;top:1px;width:1px;height:13px;background:#b4b4b4"></i>
<div class="ch" style="left:371px;width:12px;text-align:left;letter-spacing:0"><span style="position:relative;left:0px">AB</span></div>
<i style="left:396px;top:1px;width:1px;height:13px;background:#b4b4b4"></i>
<div class="ch" style="left:384px;width:12px;text-align:left;letter-spacing:0"><span style="position:relative;left:0px">AC</span></div>
<i style="left:409px;top:1px;width:1px;height:13px;background:#b4b4b4"></i>
<div class="ch" style="left:397px;width:12px;text-align:left;letter-spacing:0"><span style="position:relative;left:0px">AD</span></div>
<i style="left:422px;top:1px;width:1px;height:13px;background:#b4b4b4"></i>
<div class="ch" style="left:410px;width:12px;text-align:left;letter-spacing:0"><span style="position:relative;left:0px">AE</span></div>
<i style="left:435px;top:1px;width:1px;height:13px;background:#b4b4b4"></i>
<div class="ch" style="left:423px;width:12px;text-align:left;letter-spacing:0"><span style="position:relative;left:0px">AF</span></div>
<i style="left:448px;top:1px;width:1px;height:13px;background:#b4b4b4"></i>
<div class="ch" style="left:436px;width:12px;text-align:left;letter-spacing:0"><span style="position:relative;left:0px">AG</span></div>
<i style="left:461px;top:1px;width:1px;height:13px;background:#b4b4b4"></i>
<div class="ch" style="left:449px;width:12px;text-align:left;letter-spacing:0"><span style="position:relative;left:0px">AH</span></div>
<i style="left:474px;top:1px;width:1px;height:13px;background:#b4b4b4"></i>
<div class="ch" style="left:462px;width:12px">AI</div>
<i style="left:487px;top:1px;width:1px;height:13px;background:#b4b4b4"></i>
<div class="ch" style="left:475px;width:12px;text-align:left;letter-spacing:0"><span style="position:relative;left:0px">AJ</span></div>
<i style="left:500px;top:1px;width:1px;height:13px;background:#b4b4b4"></i>
<div class="ch" style="left:488px;width:12px;text-align:left;letter-spacing:0"><span style="position:relative;left:0px">AK</span></div>
<i style="left:513px;top:1px;width:1px;height:13px;background:#b4b4b4"></i>
<div class="ch" style="left:501px;width:12px;text-align:left;letter-spacing:0"><span style="position:relative;left:0px">AL</span></div>
<i style="left:526px;top:1px;width:1px;height:13px;background:#b4b4b4"></i>
<div class="ch" style="left:514px;width:12px;text-align:left;letter-spacing:0"><span style="position:relative;left:0px">AM</span></div>
<i style="left:539px;top:1px;width:1px;height:13px;background:#b4b4b4"></i>
<div class="ch" style="left:527px;width:12px;text-align:left;letter-spacing:0"><span style="position:relative;left:0px">AN</span></div>
<i style="left:552px;top:1px;width:1px;height:13px;background:#b4b4b4"></i>
<div class="ch" style="left:540px;width:12px;text-align:left;letter-spacing:0"><span style="position:relative;left:0px">AO</span></div>
<i style="left:565px;top:1px;width:1px;height:13px;background:#b4b4b4"></i>
<div class="ch" style="left:553px;width:12px;text-align:left;letter-spacing:0"><span style="position:relative;left:0px">AP</span></div>
<i style="left:578px;top:1px;width:1px;height:13px;background:#b4b4b4"></i>
<div class="ch" style="left:566px;width:12px;text-align:left;letter-spacing:0"><span style="position:relative;left:0px">AQ</span></div>
<i style="left:591px;top:1px;width:1px;height:13px;background:#b4b4b4"></i>
<div class="ch" style="left:579px;width:12px;text-align:left;letter-spacing:0"><span style="position:relative;left:0px">AR</span></div>
<i style="left:604px;top:1px;width:1px;height:13px;background:#b4b4b4"></i>
<div class="ch" style="left:592px;width:12px;text-align:left;letter-spacing:0"><span style="position:relative;left:0px">AS</span></div>
<i style="left:617px;top:1px;width:1px;height:13px;background:#b4b4b4"></i>
<div class="ch" style="left:605px;width:12px;text-align:left;letter-spacing:0"><span style="position:relative;left:0px">AT</span></div>
<i style="left:630px;top:1px;width:1px;height:13px;background:#b4b4b4"></i>
<div class="ch" style="left:618px;width:12px;text-align:left;letter-spacing:0"><span style="position:relative;left:0px">AU</span></div>
<i style="left:643px;top:1px;width:1px;height:13px;background:#b4b4b4"></i>
<div class="ch" style="left:631px;width:12px;text-align:left;letter-spacing:0"><span style="position:relative;left:0px">AV</span></div>
<i style="left:656px;top:1px;width:1px;height:13px;background:#b4b4b4"></i>
<div class="ch" style="left:644px;width:12px;text-align:left;letter-spacing:0"><span style="position:relative;left:0px">AW</span></div>
<i style="left:669px;top:1px;width:1px;height:13px;background:#b4b4b4"></i>
<div class="ch" style="left:657px;width:12px;text-align:left;letter-spacing:0"><span style="position:relative;left:0px">AX</span></div>
<i style="left:682px;top:1px;width:1px;height:13px;background:#b4b4b4"></i>
<div class="ch" style="left:670px;width:12px;text-align:left;letter-spacing:0"><span style="position:relative;left:0px">AY</span></div>
<i style="left:695px;top:1px;width:1px;height:13px;background:#b4b4b4"></i>
<div class="ch" style="left:683px;width:12px;text-align:left;letter-spacing:0"><span style="position:relative;left:0px">AZ</span></div>
<i style="left:708px;top:1px;width:1px;height:13px;background:#b4b4b4"></i>
<div class="ch" style="left:696px;width:12px;text-align:left;letter-spacing:0"><span style="position:relative;left:0px">BA</span></div>
<i style="left:721px;top:1px;width:1px;height:13px;background:#b4b4b4"></i>
<div class="ch" style="left:709px;width:12px;text-align:left;letter-spacing:0"><span style="position:relative;left:0px">BB</span></div>
<i style="left:734px;top:1px;width:1px;height:13px;background:#b4b4b4"></i>
<div class="ch" style="left:722px;width:12px;text-align:left;letter-spacing:0"><span style="position:relative;left:0px">BC</span></div>
<i style="left:747px;top:1px;width:1px;height:13px;background:#b4b4b4"></i>
<div class="ch" style="left:735px;width:12px;text-align:left;letter-spacing:0"><span style="position:relative;left:0px">BD</span></div>
<i style="left:760px;top:1px;width:1px;height:13px;background:#b4b4b4"></i>
<div class="ch" style="left:748px;width:12px;text-align:left;letter-spacing:0"><span style="position:relative;left:0px">BE</span></div>
<i style="left:773px;top:1px;width:1px;height:13px;background:#b4b4b4"></i>
<div class="ch" style="left:761px;width:12px;text-align:left;letter-spacing:0"><span style="position:relative;left:0px">BF</span></div>
<i style="left:786px;top:1px;width:1px;height:13px;background:#b4b4b4"></i>
<div class="ch" style="left:774px;width:12px;text-align:left;letter-spacing:0"><span style="position:relative;left:0px">BG</span></div>
<i style="left:799px;top:1px;width:1px;height:13px;background:#b4b4b4"></i>
<div class="ch" style="left:787px;width:12px;text-align:left;letter-spacing:0"><span style="position:relative;left:0px">BH</span></div>
<i style="left:812px;top:1px;width:1px;height:13px;background:#b4b4b4"></i>
<div class="ch" style="left:800px;width:12px">BI</div>
<i style="left:825px;top:1px;width:1px;height:13px;background:#b4b4b4"></i>
<div class="ch" style="left:813px;width:12px;text-align:left;letter-spacing:0"><span style="position:relative;left:0px">BJ</span></div>
<i style="left:838px;top:1px;width:1px;height:13px;background:#b4b4b4"></i>
<div class="ch" style="left:826px;width:12px;text-align:left;letter-spacing:0"><span style="position:relative;left:0px">BK</span></div>
<i style="left:851px;top:1px;width:1px;height:13px;background:#b4b4b4"></i>
<div class="ch" style="left:839px;width:12px;text-align:left;letter-spacing:0"><span style="position:relative;left:0px">BL</span></div>
<i style="left:864px;top:1px;width:1px;height:13px;background:#b4b4b4"></i>
<div class="ch" style="left:852px;width:12px;text-align:left;letter-spacing:0"><span style="position:relative;left:0px">BM</span></div>
<i style="left:877px;top:1px;width:1px;height:13px;background:#b4b4b4"></i>
<div class="ch" style="left:865px;width:12px;text-align:left;letter-spacing:0"><span style="position:relative;left:0px">BN</span></div>
<i style="left:890px;top:1px;width:1px;height:13px;background:#b4b4b4"></i>
<div class="ch" style="left:878px;width:12px;text-align:left;letter-spacing:0"><span style="position:relative;left:0px">BO</span></div>
<i style="left:903px;top:1px;width:1px;height:13px;background:#b4b4b4"></i>
<div class="ch" style="left:891px;width:12px;text-align:left;letter-spacing:0"><span style="position:relative;left:0px">BP</span></div>
<i style="left:916px;top:1px;width:1px;height:13px;background:#b4b4b4"></i>
<div class="ch" style="left:904px;width:12px;text-align:left;letter-spacing:0"><span style="position:relative;left:0px">BQ</span></div>
<i style="left:929px;top:1px;width:1px;height:13px;background:#b4b4b4"></i>
<div class="ch" style="left:917px;width:12px;text-align:left;letter-spacing:0"><span style="position:relative;left:0px">BR</span></div>
<i style="left:942px;top:1px;width:1px;height:13px;background:#b4b4b4"></i>
<div class="ch" style="left:930px;width:12px;text-align:left;letter-spacing:0"><span style="position:relative;left:0px">BS</span></div>
<i style="left:955px;top:1px;width:1px;height:13px;background:#b4b4b4"></i>
<div class="ch" style="left:943px;width:12px;text-align:left;letter-spacing:0"><span style="position:relative;left:0px">BT</span></div>
<i style="left:0px;top:39px;width:19px;height:1px;background:#b4b4b4"></i>
<div class="rh" style="top:27.54px">1</div>
<i style="left:0px;top:61px;width:19px;height:1px;background:#b4b4b4"></i>
<div class="rh" style="top:49.53px">2</div>
<i style="left:0px;top:76px;width:19px;height:1px;background:#b4b4b4"></i>
<div class="rh" style="top:64.53px">3</div>
<i style="left:0px;top:92px;width:19px;height:1px;background:#b4b4b4"></i>
<div class="rh" style="top:80.53px">4</div>
<i style="left:0px;top:107px;width:19px;height:1px;background:#b4b4b4"></i>
<div class="rh" style="top:95.53px">5</div>
<i style="left:0px;top:122px;width:19px;height:1px;background:#b4b4b4"></i>
<div class="rh" style="top:110.53px">6</div>
<i style="left:0px;top:138px;width:19px;height:1px;background:#b4b4b4"></i>
<div class="rh" style="top:126.53px">7</div>
<i style="left:0px;top:153px;width:19px;height:1px;background:#b4b4b4"></i>
<div class="rh" style="top:141.53px">8</div>
<i style="left:0px;top:168px;width:19px;height:1px;background:#b4b4b4"></i>
<div class="rh" style="top:156.53px">9</div>
<i style="left:0px;top:183px;width:19px;height:1px;background:#b4b4b4"></i>
<div class="rh" style="top:171.53px">10</div>
<i style="left:0px;top:198px;width:19px;height:1px;background:#b4b4b4"></i>
<div class="rh" style="top:186.53px">11</div>
<i style="left:0px;top:213px;width:19px;height:1px;background:#b4b4b4"></i>
<div class="rh" style="top:201.53px">12</div>
<i style="left:0px;top:228px;width:19px;height:1px;background:#b4b4b4"></i>
<div class="rh" style="top:216.53px">13</div>
<i style="left:0px;top:243px;width:19px;height:1px;background:#b4b4b4"></i>
<div class="rh" style="top:231.53px">14</div>
<i style="left:0px;top:258px;width:19px;height:1px;background:#b4b4b4"></i>
<div class="rh" style="top:246.53px">15</div>
<i style="left:0px;top:273px;width:19px;height:1px;background:#b4b4b4"></i>
<div class="rh" style="top:261.54px">16</div>
<i style="left:0px;top:288px;width:19px;height:1px;background:#b4b4b4"></i>
<div class="rh" style="top:276.54px">17</div>
<i style="left:0px;top:303px;width:19px;height:1px;background:#b4b4b4"></i>
<div class="rh" style="top:291.54px">18</div>
<i style="left:0px;top:318px;width:19px;height:1px;background:#b4b4b4"></i>
<div class="rh" style="top:306.54px">19</div>
<i style="left:0px;top:333px;width:19px;height:1px;background:#b4b4b4"></i>
<div class="rh" style="top:321.54px">20</div>
<i style="left:0px;top:348px;width:19px;height:1px;background:#b4b4b4"></i>
<div class="rh" style="top:336.54px">21</div>
<i style="left:0px;top:364px;width:19px;height:1px;background:#b4b4b4"></i>
<div class="rh" style="top:352.54px">22</div>
<i style="left:0px;top:380px;width:19px;height:1px;background:#b4b4b4"></i>
<div class="rh" style="top:368.54px">23</div>
<i style="left:0px;top:395px;width:19px;height:1px;background:#b4b4b4"></i>
<div class="rh" style="top:383.54px">24</div>
<i style="left:0px;top:410px;width:19px;height:1px;background:#b4b4b4"></i>
<div class="rh" style="top:398.54px">25</div>
<i style="left:0px;top:425px;width:19px;height:1px;background:#b4b4b4"></i>
<div class="rh" style="top:413.54px">26</div>
<i style="left:0px;top:440px;width:19px;height:1px;background:#b4b4b4"></i>
<div class="rh" style="top:428.54px">27</div>
<i style="left:0px;top:455px;width:19px;height:1px;background:#b4b4b4"></i>
<div class="rh" style="top:443.54px">28</div>
<i style="left:0px;top:470px;width:19px;height:1px;background:#b4b4b4"></i>
<div class="rh" style="top:458.54px">29</div>
<i style="left:0px;top:485px;width:19px;height:1px;background:#b4b4b4"></i>
<div class="rh" style="top:473.54px">30</div>
<i style="left:0px;top:500px;width:19px;height:1px;background:#b4b4b4"></i>
<div class="rh" style="top:488.54px">31</div>
<i style="left:0px;top:515px;width:19px;height:1px;background:#b4b4b4"></i>
<div class="rh" style="top:503.54px">32</div>
<i style="left:0px;top:530px;width:19px;height:1px;background:#b4b4b4"></i>
<div class="rh" style="top:518.53px">33</div>
<i style="left:0px;top:545px;width:19px;height:1px;background:#b4b4b4"></i>
<div class="rh" style="top:533.53px">34</div>
<i style="left:0px;top:560px;width:19px;height:1px;background:#b4b4b4"></i>
<div class="rh" style="top:548.53px">35</div>
<i style="left:0px;top:575px;width:19px;height:1px;background:#b4b4b4"></i>
<div class="rh" style="top:563.53px">36</div>
<i style="left:0px;top:590px;width:19px;height:1px;background:#b4b4b4"></i>
<div class="rh" style="top:578.53px">37</div>
<i style="left:0px;top:605px;width:19px;height:1px;background:#b4b4b4"></i>
<div class="rh" style="top:593.53px">38</div>
<i style="left:0px;top:620px;width:19px;height:1px;background:#b4b4b4"></i>
<div class="rh" style="top:608.53px">39</div>
<i style="left:0px;top:635px;width:19px;height:1px;background:#b4b4b4"></i>
<div class="rh" style="top:623.53px">40</div>
<i style="left:0px;top:650px;width:19px;height:1px;background:#b4b4b4"></i>
<div class="rh" style="top:638.53px">41</div>
<i style="left:0px;top:665px;width:19px;height:1px;background:#b4b4b4"></i>
<div class="rh" style="top:653.53px">42</div>
<i style="left:0px;top:680px;width:19px;height:1px;background:#b4b4b4"></i>
<div class="rh" style="top:668.53px">43</div>
<i style="left:0px;top:695px;width:19px;height:1px;background:#b4b4b4"></i>
<div class="rh" style="top:683.53px">44</div>
<i style="left:0px;top:710px;width:19px;height:1px;background:#b4b4b4"></i>
<div class="rh" style="top:698.53px">45</div>
<i style="left:0px;top:725px;width:19px;height:1px;background:#b4b4b4"></i>
<div class="rh" style="top:713.53px">46</div>
<i style="left:0px;top:740px;width:19px;height:1px;background:#b4b4b4"></i>
<div class="rh" style="top:728.53px">47</div>
<i style="left:0px;top:755px;width:19px;height:1px;background:#b4b4b4"></i>
<div class="rh" style="top:743.53px">48</div>
<i style="left:0px;top:770px;width:19px;height:1px;background:#b4b4b4"></i>
<div class="rh" style="top:758.53px">49</div>
<div class="rh" style="top:773.53px">50</div>
<div class="rh" style="top:788.53px">51</div></body></html>
